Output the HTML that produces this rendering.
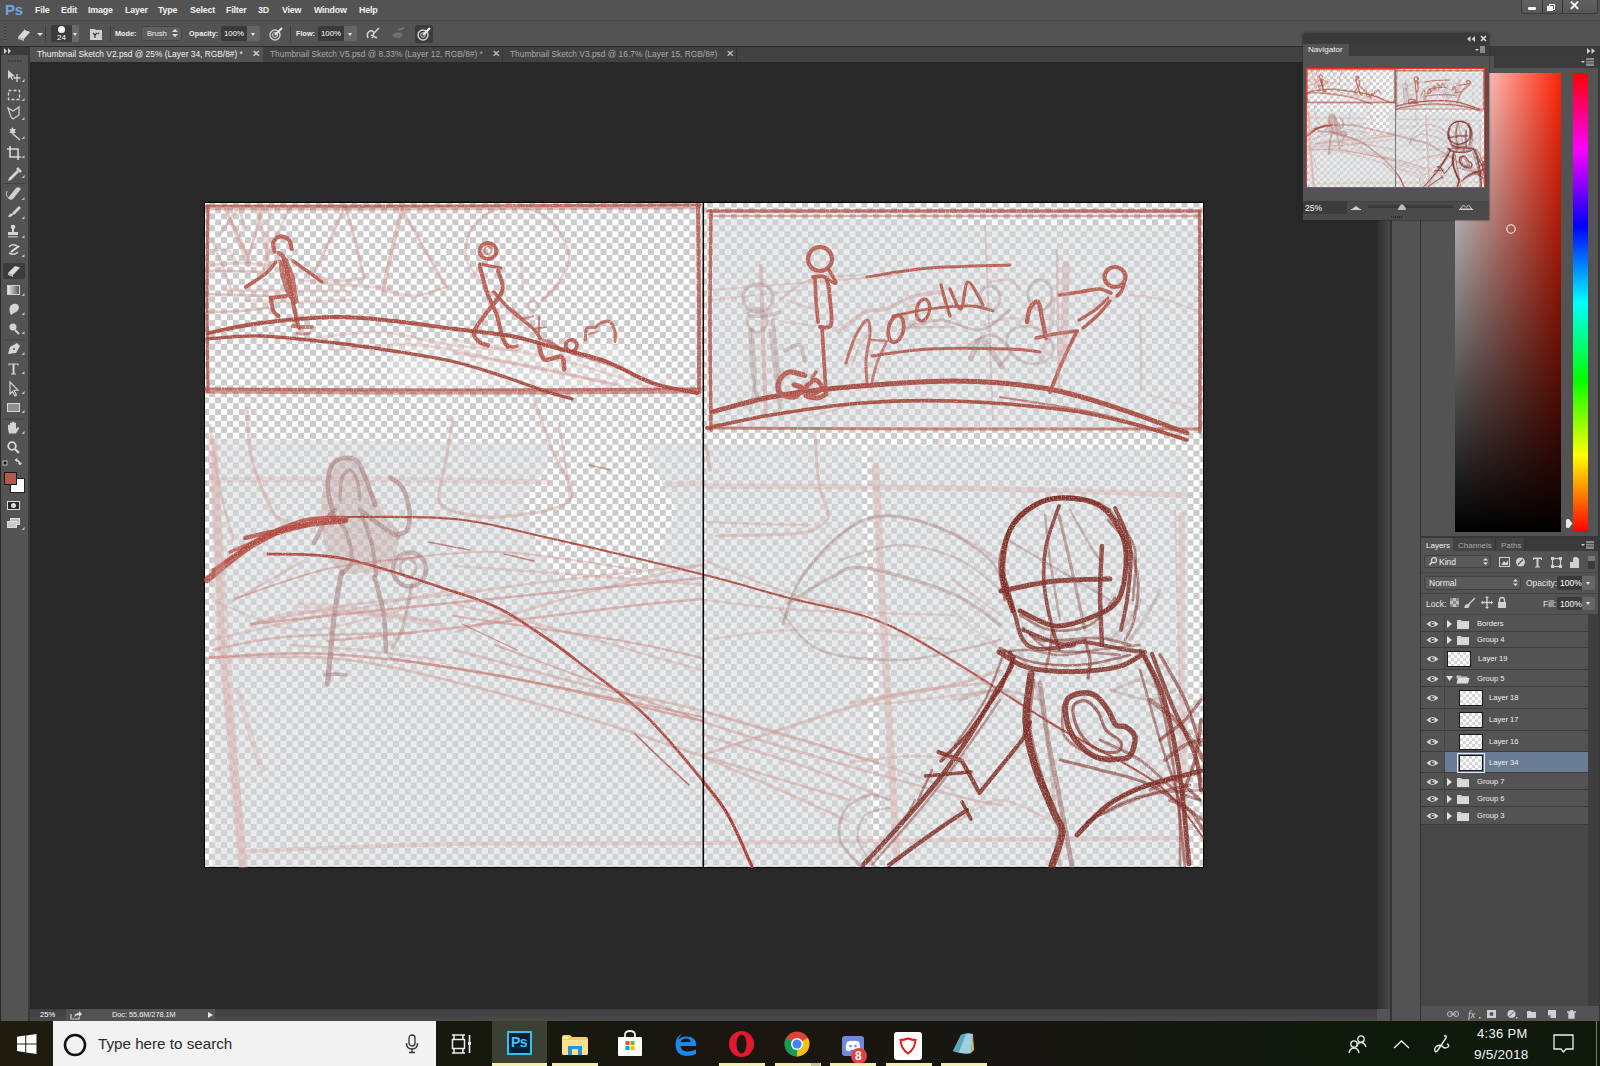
<!DOCTYPE html>
<html><head><meta charset="utf-8">
<style>
*{margin:0;padding:0;box-sizing:border-box}
html,body{width:1600px;height:1066px;overflow:hidden;background:#282828;font-family:"Liberation Sans",sans-serif;font-size:9px;color:#e6e6e6}
.a{position:absolute}
svg{position:absolute;overflow:visible}
#menubar{left:0;top:0;width:1600px;height:20px;background:#535353}
#menubar span{position:absolute;top:5px;font-size:8.9px;color:#f0f0f0;line-height:11px;font-weight:bold;letter-spacing:-0.2px}
#winbtn{left:1521px;top:0;width:77px;height:14px;background:linear-gradient(#606060,#575757);border:1px solid #3a3a3a;border-top:none;border-radius:0 0 3px 3px}
#optbar{left:0;top:20px;width:1600px;height:26px;background:#535353;border-top:1px solid #454545}
.txt{position:absolute;color:#e8e8e8;font-size:9px;line-height:10px;white-space:nowrap}
.inp{position:absolute;background:#3a3a3a;border-radius:2px}
.btn{position:absolute;background:#5e5e5e;border:1px solid #464646;border-radius:3px}
.vdiv{position:absolute;width:1px;background:#3e3e3e}
#tabbar{left:30px;top:47px;width:1348px;height:15px;background:#414141}
#toolbar{left:1px;top:47px;width:27px;height:974px;background:#535353}
#status{left:30px;top:1009px;width:1348px;height:12px;background:#464646}
#dockR{left:1377px;top:62px;width:13px;height:947px;background:linear-gradient(to right,#2e2e2e,#474747)}
#dock1{left:1392px;top:46px;width:28px;height:975px;background:#535353}
#dock{left:1421px;top:46px;width:179px;height:975px;background:#535353}
#taskbar{left:0;top:1021px;width:1600px;height:45px;background:linear-gradient(to right,#1f1c0f 0%,#161a0e 25%,#1a1610 50%,#171610 65%,#0e1a0c 85%,#0f190c 100%)}
</style></head><body>
<!-- menu bar -->
<div id="menubar" class="a">
 <span style="left:5px;top:1px;font-size:15px;line-height:17px;font-weight:bold;color:#6ea6dd">Ps</span>
 <span style="left:35px">File</span>
 <span style="left:61px">Edit</span>
 <span style="left:88px">Image</span>
 <span style="left:125px">Layer</span>
 <span style="left:158px">Type</span>
 <span style="left:190px">Select</span>
 <span style="left:226px">Filter</span>
 <span style="left:258px">3D</span>
 <span style="left:282px">View</span>
 <span style="left:314px">Window</span>
 <span style="left:359px">Help</span>
</div>
<div id="winbtn" class="a">
 <div class="a" style="left:20px;top:0;width:1px;height:13px;background:#333"></div>
 <div class="a" style="left:40px;top:0;width:1px;height:13px;background:#333"></div>
 <div class="a" style="left:6px;top:7px;width:8px;height:3px;background:#f4f4f4;border-radius:1px"></div>
 <div class="a" style="left:27px;top:4px;width:6px;height:6px;border:1.5px solid #f4f4f4"></div>
 <div class="a" style="left:25px;top:6px;width:6px;height:5px;background:#f4f4f4;border:1.5px solid #f4f4f4"></div>
 <span class="a" style="left:47px;top:-1px;font-size:13px;font-weight:bold;color:#f4f4f4;line-height:14px">&#x2715;</span>
</div>
<!-- options bar -->
<div id="optbar" class="a">
 <div class="a" style="left:4px;top:6px;width:2px;height:14px;background:repeating-linear-gradient(#3a3a3a 0 1px,#5a5a5a 1px 3px)"></div>
 <svg style="left:16px;top:5px" width="16" height="16" viewBox="0 0 16 16"><path d="M2 11 L9 3 L15 5 L8 13 Z" fill="#d8d8d8"/><path d="M2 11 L8 13 L8 15 L2 13 Z" fill="#bdbdbd"/><path d="M9 3 L15 5 L15 6 L9 4Z" fill="#222"/></svg>
 <div class="a" style="left:37px;top:12px;width:0;height:0;border-left:3px solid transparent;border-right:3px solid transparent;border-top:3px solid #e6e6e6"></div>
 <div class="vdiv" style="left:45px;top:5px;height:16px"></div>
 <div class="inp" style="left:51px;top:4px;width:22px;height:17px;background:#3b3b3b"></div>
 <div class="a" style="left:72px;top:4px;width:7px;height:17px;background:#6a6a6a;border-radius:0 2px 2px 0"></div>
 <div class="a" style="left:73px;top:12px;width:0;height:0;border-left:2.5px solid transparent;border-right:2.5px solid transparent;border-top:3px solid #e6e6e6"></div>
 <div class="a" style="left:58px;top:5px;width:7px;height:7px;border-radius:50%;background:#f4f4f4"></div>
 <span class="txt" style="left:57px;top:13px;font-size:8px;line-height:8px;color:#fff">24</span>
 <svg style="left:89px;top:6px" width="14" height="14" viewBox="0 0 14 14"><path d="M1 2 h5 l1 1 h6 v10 h-12z" fill="#cfcfcf"/><path d="M4 6 l2 2 l2 -2 M6 8 v3 M9 6 l1 1" stroke="#333" stroke-width="1.2" fill="none"/></svg>
 <div class="vdiv" style="left:110px;top:5px;height:16px"></div>
 <span class="txt" style="left:115px;top:8px;font-size:7.3px;font-weight:bold;color:#eee">Mode:</span>
 <div class="btn" style="left:141px;top:5px;width:41px;height:15px;background:#5d5d5d"></div>
 <span class="txt" style="left:147px;top:8px;font-size:7.6px;color:#eee">Brush</span>
 <svg style="left:172px;top:7px" width="6" height="10" viewBox="0 0 6 10"><path d="M0 4 L3 1 L6 4Z M0 6 L3 9 L6 6Z" fill="#e0e0e0"/></svg>
 <span class="txt" style="left:189px;top:8px;font-size:7.3px;font-weight:bold;color:#eee">Opacity:</span>
 <div class="inp" style="left:221px;top:5px;width:27px;height:15px;background:#3a3a3a"></div>
 <span class="txt" style="left:224px;top:8px;color:#fff;font-size:7.8px">100%</span>
 <div class="a" style="left:247px;top:5px;width:13px;height:15px;background:#666;border-radius:0 2px 2px 0"></div>
 <div class="a" style="left:251px;top:12px;width:0;height:0;border-left:2.5px solid transparent;border-right:2.5px solid transparent;border-top:3px solid #e6e6e6"></div>
 <svg style="left:268px;top:5px" width="16" height="16" viewBox="0 0 16 16"><circle cx="7" cy="9" r="5" fill="none" stroke="#cfcfcf" stroke-width="1.4"/><circle cx="7" cy="9" r="2.5" fill="none" stroke="#cfcfcf" stroke-width="1"/><path d="M7 9 L14 2" stroke="#e6e6e6" stroke-width="2"/></svg>
 <div class="vdiv" style="left:290px;top:5px;height:16px"></div>
 <span class="txt" style="left:296px;top:8px;font-size:7.3px;font-weight:bold;color:#eee">Flow:</span>
 <div class="inp" style="left:318px;top:5px;width:27px;height:15px;background:#3a3a3a"></div>
 <span class="txt" style="left:321px;top:8px;color:#fff;font-size:7.8px">100%</span>
 <div class="a" style="left:344px;top:5px;width:13px;height:15px;background:#666;border-radius:0 2px 2px 0"></div>
 <div class="a" style="left:348px;top:12px;width:0;height:0;border-left:2.5px solid transparent;border-right:2.5px solid transparent;border-top:3px solid #e6e6e6"></div>
 <svg style="left:365px;top:6px" width="16" height="14" viewBox="0 0 16 14"><path d="M3 11 Q1 6 5 4 Q8 3 9 6 L7 11 M9 6 L14 1 M6 8 L12 11" stroke="#d0d0d0" stroke-width="1.6" fill="none"/></svg>
 <svg style="left:390px;top:6px" width="16" height="14" viewBox="0 0 16 14"><path d="M2 8 Q6 4 12 6 Q14 8 10 11 Q5 12 2 8Z" fill="#6e6e6e"/><path d="M8 3 L14 1" stroke="#7a7a7a" stroke-width="1.5"/></svg>
 <div class="a" style="left:415px;top:4px;width:18px;height:18px;background:#3c3c3c;border-radius:2px"></div>
 <svg style="left:416px;top:5px" width="16" height="16" viewBox="0 0 16 16"><circle cx="7" cy="9" r="5" fill="none" stroke="#d6d6d6" stroke-width="1.4"/><circle cx="7" cy="9" r="2.3" fill="none" stroke="#d6d6d6" stroke-width="1"/><path d="M7 9 L14 2" stroke="#f0f0f0" stroke-width="2.2"/></svg>
</div>
<div id="tabbar" class="a">
 <div class="a" style="left:0;top:0;width:233px;height:15px;background:#535353"></div>
 <span class="txt" style="left:7px;top:2px;color:#f2f2f2;font-size:8.4px">Thumbnail Sketch V2.psd @ 25% (Layer 34, RGB/8#) *</span>
 <span class="txt" style="left:222px;top:2px;color:#e6e6e6;font-size:10px">&#x2715;</span>
 <span class="txt" style="left:240px;top:2px;color:#a8a8a8;font-size:8.4px">Thumbnail Sketch V5.psd @ 8.33% (Layer 12, RGB/8#) *</span>
 <span class="txt" style="left:462px;top:2px;color:#d0d0d0;font-size:10px">&#x2715;</span>
 <div class="vdiv" style="left:472px;top:0;height:15px;background:#353535"></div>
 <span class="txt" style="left:480px;top:2px;color:#a8a8a8;font-size:8.4px">Thumbnail Sketch V3.psd @ 16.7% (Layer 15, RGB/8#)</span>
 <span class="txt" style="left:696px;top:2px;color:#d0d0d0;font-size:10px">&#x2715;</span>
 <div class="vdiv" style="left:706px;top:0;height:15px;background:#353535"></div>
</div>
<!--CANVAS-->
<svg class="a" style="left:204px;top:202px" width="1000" height="666" viewBox="204 202 1000 666">
<defs>
<pattern id="chk" patternUnits="userSpaceOnUse" x="1.7" y="0" width="11.858" height="11.858"><rect width="11.858" height="11.858" fill="#fff"/><rect x="5.929" y="0" width="5.929" height="5.929" fill="#cbcbcb"/><rect x="0" y="5.929" width="5.929" height="5.929" fill="#cbcbcb"/></pattern>
<filter id="grain" filterUnits="userSpaceOnUse" x="204" y="202" width="1000" height="666">
<feTurbulence type="fractalNoise" baseFrequency="0.75" numOctaves="1" seed="7" result="n"/>
<feColorMatrix in="n" type="matrix" values="0 0 0 0 0  0 0 0 0 0  0 0 0 0 0  0 0 0 -2.0 2.05" result="a"/>
<feComposite in="SourceGraphic" in2="a" operator="in"/>
</filter>
</defs>
<rect x="204" y="202" width="1000" height="666" fill="#000"/>
<rect x="205" y="203" width="998" height="664" fill="url(#chk)"/>
<g id="sketch">
<g id="ov"><path fill="rgba(211,215,218,0.5)" d="M212 439L548 443L548 467L523 497L536 548L560 580L650 576L676 510L642 443L703 443L703 867L212 867Z"/>
<path fill="rgba(211,215,218,0.5)" d="M713 219L953 219L953 225L1197 225L1197 429L713 429Z"/>
<path fill="rgba(211,215,218,0.5)" d="M706 445L861 445L873 867L706 867Z"/>
<path fill="rgba(211,215,218,0.5)" d="M870.5 445L1188 450L1188 867L883 867Z"/>
<path fill="rgba(240,240,240,0.35)" d="M390 340L620 345L690 392L390 392Z"/></g>
<g id="ink" fill="none" stroke-linecap="round" stroke-linejoin="round" filter="url(#grain)">
<path d="M225.0 209.0C227.2 213.3 233.8 226.2 238.0 235.0C242.2 243.8 248.0 257.5 250.0 262.0" stroke="#cf9994" stroke-width="3.0" opacity="0.55"/>
<path d="M262.0 209.0C260.8 213.3 257.5 226.2 255.0 235.0C252.5 243.8 248.3 257.5 247.0 262.0" stroke="#cf9994" stroke-width="3.0" opacity="0.55"/>
<path d="M290.0 208.0C286.7 215.0 274.7 238.8 270.0 250.0C265.3 261.2 263.3 270.8 262.0 275.0" stroke="#cf9994" stroke-width="3.0" opacity="0.4"/>
<path d="M212.0 240.0C213.7 244.2 218.7 256.3 222.0 265.0C225.3 273.7 230.3 287.5 232.0 292.0" stroke="#cf9994" stroke-width="3.0" opacity="0.4"/>
<path d="M212.0 265.0C216.7 264.7 230.0 262.8 240.0 263.0C250.0 263.2 266.7 265.5 272.0 266.0" stroke="#cf9994" stroke-width="3.0" opacity="0.45"/>
<path d="M345.0 206.0C342.5 211.7 335.3 228.5 330.0 240.0C324.7 251.5 315.8 269.2 313.0 275.0" stroke="#cf9994" stroke-width="3.0" opacity="0.55"/>
<path d="M345.0 206.0C346.7 211.7 351.8 228.0 355.0 240.0C358.2 252.0 362.5 271.7 364.0 278.0" stroke="#cf9994" stroke-width="3.0" opacity="0.55"/>
<path d="M313.0 275.0C317.2 276.0 329.5 280.5 338.0 281.0C346.5 281.5 359.7 278.5 364.0 278.0" stroke="#cf9994" stroke-width="3.0" opacity="0.45"/>
<path d="M402.0 209.0C400.3 215.8 395.2 236.5 392.0 250.0C388.8 263.5 384.5 283.3 383.0 290.0" stroke="#cf9994" stroke-width="4.0" opacity="0.55"/>
<path d="M402.0 209.0C405.8 215.8 417.7 237.0 425.0 250.0C432.3 263.0 442.5 280.8 446.0 287.0" stroke="#cf9994" stroke-width="3.0" opacity="0.55"/>
<path d="M383.0 290.0C388.3 291.0 404.5 296.5 415.0 296.0C425.5 295.5 440.8 288.5 446.0 287.0" stroke="#cf9994" stroke-width="3.0" opacity="0.45"/>
<path d="M300.0 280.0C307.5 280.8 330.0 283.7 345.0 285.0C360.0 286.3 382.5 287.5 390.0 288.0" stroke="#cf9994" stroke-width="3.0" opacity="0.4"/>
<path d="M207.0 271.0C211.7 271.0 225.8 270.8 235.0 271.0C244.2 271.2 257.5 271.8 262.0 272.0" stroke="#cf9994" stroke-width="2.75" opacity="0.6"/>
<path d="M207.0 294.0C212.5 294.2 229.8 294.7 240.0 295.0C250.2 295.3 263.3 295.8 268.0 296.0" stroke="#cf9994" stroke-width="2.75" opacity="0.6"/>
<path d="M207.0 312.0C212.5 311.8 229.8 311.7 240.0 311.0C250.2 310.3 263.3 308.5 268.0 308.0" stroke="#cf9994" stroke-width="2.75" opacity="0.6"/>
<path d="M225.0 290.0C235.8 290.2 269.8 290.8 290.0 291.0C310.2 291.2 336.7 291.0 346.0 291.0" stroke="#cf9994" stroke-width="3.0" opacity="0.4"/>
<path d="M245.0 300.0C254.2 300.3 282.2 302.0 300.0 302.0C317.8 302.0 343.3 300.3 352.0 300.0" stroke="#cf9994" stroke-width="3.0" opacity="0.35"/>
<path d="M300.0 340.0C313.3 338.7 355.0 331.2 380.0 332.0C405.0 332.8 426.7 342.0 450.0 345.0C473.3 348.0 508.3 349.2 520.0 350.0" stroke="#cf9994" stroke-width="3.0" opacity="0.35"/>
<path d="M330.0 350.0C345.0 349.2 388.3 342.5 420.0 345.0C451.7 347.5 486.7 358.3 520.0 365.0C553.3 371.7 603.3 381.7 620.0 385.0" stroke="#cf9994" stroke-width="3.0" opacity="0.35"/>
<path d="M455.0 353.0C469.2 355.5 513.3 362.7 540.0 368.0C566.7 373.3 602.5 382.2 615.0 385.0" stroke="#cf9994" stroke-width="3.0" opacity="0.4"/>
<path d="M455.0 340.0C472.5 343.3 525.8 351.7 560.0 360.0C594.2 368.3 643.3 385.0 660.0 390.0" stroke="#cf9994" stroke-width="3.0" opacity="0.3"/>
<path d="M206.0 206.0C246.7 206.0 367.7 206.2 450.0 206.0C532.3 205.8 658.3 205.2 700.0 205.0" stroke="#b0554b" stroke-width="3.24" opacity="0.85"/>
<path d="M206.0 209.0C246.7 209.0 367.7 209.2 450.0 209.0C532.3 208.8 658.3 208.2 700.0 208.0" stroke="#b0554b" stroke-width="2.7" opacity="0.4"/>
<path d="M208.0 206.0C207.8 221.7 207.0 269.0 207.0 300.0C207.0 331.0 207.8 376.7 208.0 392.0" stroke="#b0554b" stroke-width="3.24" opacity="0.85"/>
<path d="M698.0 205.0C698.2 220.8 698.8 268.8 699.0 300.0C699.2 331.2 699.0 376.7 699.0 392.0" stroke="#b0554b" stroke-width="4.050000000000001" opacity="0.85"/>
<path d="M206.0 389.0C246.7 389.2 367.7 390.0 450.0 390.0C532.3 390.0 658.3 389.2 700.0 389.0" stroke="#b0554b" stroke-width="3.24" opacity="0.85"/>
<path d="M206.0 392.0C246.7 392.2 367.7 393.0 450.0 393.0C532.3 393.0 658.3 392.2 700.0 392.0" stroke="#b0554b" stroke-width="3.24" opacity="0.6"/>
<path d="M274.6 251.6C274.4 250.1 272.4 244.9 273.3 242.4C274.2 239.9 277.3 236.9 279.9 236.5C282.5 236.1 287.0 237.7 289.0 239.8C291.0 241.9 291.2 247.5 291.7 249.0" stroke="#b5564b" stroke-width="4.14" opacity="0.92"/>
<path d="M278.5 253.0C279.4 253.8 282.1 253.2 283.8 258.0C285.6 262.8 286.8 271.3 289.0 281.8C291.2 292.3 295.2 313.5 297.0 321.2C298.8 328.9 299.2 326.7 299.6 327.8" stroke="#b5564b" stroke-width="4.14" opacity="0.92"/>
<path d="M279 261L287 259L294 277L298 302L294 304L287 294L281 276Z" fill="#b5564b" opacity="0.8" stroke="#b5564b" stroke-width="1.5"/>
<path d="M286.0 296.0C284.7 296.2 280.5 296.7 278.0 297.0C275.5 297.3 272.2 297.8 271.0 298.0" stroke="#b5564b" stroke-width="4.14" opacity="0.92"/>
<path d="M245.7 287.0C249.0 284.8 260.4 278.0 265.4 273.9C270.4 269.8 274.1 264.1 275.9 262.1" stroke="#b5564b" stroke-width="3.6799999999999997" opacity="0.92"/>
<path d="M293.0 260.8C295.3 262.5 302.2 267.5 307.0 271.0C311.8 274.5 319.4 280.0 321.9 281.8" stroke="#b5564b" stroke-width="3.4499999999999997" opacity="0.92"/>
<path d="M270.7 297.6C271.1 299.8 272.0 307.6 273.3 310.7C274.6 313.8 277.6 315.1 278.5 316.0" stroke="#b5564b" stroke-width="4.14" opacity="0.92"/>
<path d="M293.0 326.0C294.5 326.2 298.8 326.8 302.0 327.0C305.2 327.2 310.3 327.0 312.0 327.0" stroke="#b5564b" stroke-width="3.9099999999999997" opacity="0.75"/>
<path d="M297.0 333.0C298.0 333.2 300.8 334.0 303.0 334.0C305.2 334.0 308.8 333.2 310.0 333.0" stroke="#b5564b" stroke-width="2.9899999999999998" opacity="0.6"/>
<path d="M221.0 233.0C223.8 229.2 234.2 210.7 238.0 210.0C241.8 209.3 243.0 225.8 244.0 229.0" stroke="#cf9994" stroke-width="3.25" opacity="0.45"/>
<path d="M230 219L248 265" stroke="#cf9994" stroke-width="3.75" opacity="0.4"/>
<path d="M258 210L270 268" stroke="#cf9994" stroke-width="3.75" opacity="0.4"/>
<path d="M270 210L266 258" stroke="#cf9994" stroke-width="3.0" opacity="0.35"/>
<path d="M214.0 250.0C216.3 250.0 224.3 248.0 228.0 250.0C231.7 252.0 234.7 260.0 236.0 262.0" stroke="#cf9994" stroke-width="3.0" opacity="0.4"/>
<ellipse cx="488" cy="251" rx="8.5" ry="8" stroke="#b5564b" stroke-width="3.9099999999999997" opacity="0.92"/>
<ellipse cx="488" cy="250" rx="3.5" ry="4" stroke="#b5564b" stroke-width="2.3" opacity="0.6"/>
<path d="M479.7 263.8C481.4 264.2 486.5 265.3 490.0 266.0C493.5 266.7 499.0 267.7 500.8 268.0" stroke="#b5564b" stroke-width="3.2199999999999998" opacity="0.92"/>
<path d="M479.7 265.2C480.9 269.7 484.0 283.8 486.8 292.0C489.6 300.2 494.0 307.0 496.6 314.5C499.2 322.0 500.4 331.6 502.3 337.0C504.2 342.4 507.0 345.2 507.9 346.9" stroke="#b5564b" stroke-width="4.14" opacity="0.92"/>
<path d="M498.0 270.8C498.7 274.1 504.4 283.3 502.3 290.6C500.2 297.9 490.1 307.7 485.4 314.5C480.7 321.3 475.3 326.9 474.1 331.4C472.9 335.9 476.0 338.9 478.3 341.3C480.6 343.7 486.6 344.8 488.2 345.5" stroke="#b5564b" stroke-width="4.14" opacity="0.92"/>
<path d="M505.0 344.0C506.2 344.5 510.0 346.7 512.0 347.0C514.0 347.3 516.2 346.2 517.0 346.0" stroke="#b5564b" stroke-width="3.4499999999999997" opacity="0.92"/>
<path d="M493.8 292.0C495.9 294.3 502.3 301.8 506.5 306.0C510.7 310.2 514.8 313.5 519.2 317.3C523.7 321.1 529.7 325.1 533.2 328.6C536.7 332.1 539.1 336.9 540.3 338.5" stroke="#b5564b" stroke-width="3.4499999999999997" opacity="0.92"/>
<path d="M513.0 309.0C514.7 310.5 519.7 316.8 523.0 318.0C526.3 319.2 531.3 316.3 533.0 316.0" stroke="#b5564b" stroke-width="2.3" opacity="0.6"/>
<path d="M539 317L539 336" stroke="#b5564b" stroke-width="2.07" opacity="0.7"/>
<path d="M533 329L546 327" stroke="#b5564b" stroke-width="2.07" opacity="0.7"/>
<ellipse cx="533.2" cy="306" rx="5" ry="5" stroke="#cf9994" stroke-width="2.5" opacity="0.5"/>
<path d="M542.0 300.0C543.7 298.7 549.2 294.8 552.0 292.0C554.8 289.2 557.8 284.5 559.0 283.0" stroke="#cf9994" stroke-width="2.5" opacity="0.45"/>
<path d="M478.0 277.0C476.0 273.8 467.3 265.5 466.0 258.0C464.7 250.5 466.0 239.7 470.0 232.0C474.0 224.3 482.2 216.2 490.0 212.0C497.8 207.8 507.0 205.7 517.0 207.0C527.0 208.3 541.3 212.0 550.0 220.0C558.7 228.0 567.3 245.0 569.0 255.0C570.7 265.0 564.5 272.5 560.0 280.0C555.5 287.5 545.0 296.7 542.0 300.0" stroke="#cf9994" stroke-width="2.75" opacity="0.45"/>
<path d="M521 260L523 290" stroke="#cf9994" stroke-width="2.75" opacity="0.4"/>
<ellipse cx="571.3" cy="345.5" rx="5.6" ry="5.6" stroke="#b5564b" stroke-width="3.9099999999999997" opacity="0.92"/>
<path d="M538.9 345.5C539.8 347.9 540.8 357.7 544.5 359.6C548.2 361.5 558.1 355.2 561.4 356.8C564.7 358.4 563.7 367.3 564.2 369.4" stroke="#b5564b" stroke-width="4.6" opacity="0.92"/>
<path d="M543.0 340.0C544.5 340.5 549.0 341.3 552.0 343.0C555.0 344.7 559.5 348.8 561.0 350.0" stroke="#b5564b" stroke-width="3.4499999999999997" opacity="0.7"/>
<path d="M585.4 339.9C585.6 338.0 585.2 330.7 586.8 328.6C588.4 326.5 592.9 328.1 595.2 327.2C597.5 326.3 598.4 323.9 600.8 323.0C603.1 322.1 606.9 320.1 609.3 321.5C611.6 322.9 614.0 328.1 614.9 331.4C615.8 334.7 614.9 339.6 614.9 341.3" stroke="#b5564b" stroke-width="3.2199999999999998" opacity="0.8"/>
<path d="M589 334L597 332" stroke="#b5564b" stroke-width="2.3" opacity="0.6"/>
<path d="M208.0 333.0C216.8 331.3 239.7 325.7 261.0 323.0C282.3 320.3 314.0 317.3 336.0 317.0C358.0 316.7 373.2 319.0 393.0 321.0C412.8 323.0 435.3 326.5 455.0 329.0C474.7 331.5 495.3 333.2 511.0 336.0C526.7 338.8 533.3 341.8 549.0 346.0C564.7 350.2 587.8 354.8 605.0 361.0C622.2 367.2 636.7 377.7 652.0 383.0C667.3 388.3 689.5 391.3 697.0 393.0" stroke="#a5443a" stroke-width="3.9600000000000004" opacity="0.92"/>
<path d="M207.0 339.0C216.0 338.5 239.5 335.3 261.0 336.0C282.5 336.7 314.0 340.5 336.0 343.0C358.0 345.5 373.2 347.8 393.0 351.0C412.8 354.2 436.8 357.8 455.0 362.0C473.2 366.2 486.5 371.0 502.0 376.0C517.5 381.0 536.3 388.2 548.0 392.0C559.7 395.8 568.0 397.8 572.0 399.0" stroke="#a5443a" stroke-width="3.3000000000000003" opacity="0.92"/>
<path d="M560.0 350.0C568.3 352.5 593.3 359.2 610.0 365.0C626.7 370.8 651.7 381.7 660.0 385.0" stroke="#a8463c" stroke-width="2.2" opacity="0.6"/>
<path d="M247.0 409.0C247.8 417.5 247.7 442.8 252.0 460.0C256.3 477.2 267.2 501.8 273.0 512.0C278.8 522.2 284.7 519.5 287.0 521.0" stroke="#cf9994" stroke-width="3.5" opacity="0.45"/>
<path d="M210.0 425.0C211.5 434.8 215.2 464.8 219.0 484.0C222.8 503.2 230.7 530.7 233.0 540.0" stroke="#cf9994" stroke-width="2.75" opacity="0.4"/>
<path d="M214.0 455.0C214.8 472.5 217.8 529.2 219.0 560.0C220.2 590.8 218.8 609.7 221.0 640.0C223.2 670.3 228.3 704.7 232.0 742.0C235.7 779.3 241.2 843.7 243.0 864.0" stroke="#d9aaa6" stroke-width="7.700000000000001" opacity="0.35"/>
<path d="M238.0 690.0C240.8 700.0 251.0 736.7 255.0 750.0C259.0 763.3 260.8 766.7 262.0 770.0" stroke="#d9aaa6" stroke-width="5.5" opacity="0.3"/>
<path d="M453.0 418.0C451.8 425.0 448.3 446.3 446.0 460.0C443.7 473.7 437.5 491.3 439.0 500.0C440.5 508.7 452.3 510.0 455.0 512.0" stroke="#cf9994" stroke-width="3.25" opacity="0.45"/>
<path d="M534.0 399.0C537.0 407.5 546.0 433.2 552.0 450.0C558.0 466.8 578.7 488.8 570.0 500.0C561.3 511.2 519.2 515.0 500.0 517.0C480.8 519.0 462.5 512.8 455.0 512.0" stroke="#cf9994" stroke-width="3.25" opacity="0.45"/>
<path d="M559.0 424.0C560.0 430.0 563.2 447.3 565.0 460.0C566.8 472.7 569.2 493.3 570.0 500.0" stroke="#cf9994" stroke-width="2.5" opacity="0.4"/>
<path d="M212.0 480.0C235.0 479.8 294.0 478.7 350.0 479.0C406.0 479.3 515.0 481.5 548.0 482.0" stroke="#d9aaa6" stroke-width="5.5" opacity="0.3"/>
<path d="M665 485L703 483" stroke="#d9aaa6" stroke-width="5.5" opacity="0.3"/>
<path d="M233.0 601.0C239.2 597.5 258.3 586.7 270.0 580.0C281.7 573.3 297.5 564.2 303.0 561.0" stroke="#cf9994" stroke-width="2.5" opacity="0.45"/>
<path d="M252.0 624.0C268.3 620.8 316.2 610.0 350.0 605.0C383.8 600.0 420.0 598.2 455.0 594.0C490.0 589.8 519.2 584.8 560.0 580.0C600.8 575.2 676.7 567.5 700.0 565.0" stroke="#cf9994" stroke-width="2.75" opacity="0.4"/>
<path d="M210.0 657.0C231.7 657.3 299.2 654.8 340.0 659.0C380.8 663.2 411.7 671.5 455.0 682.0C498.3 692.5 558.7 709.7 600.0 722.0C641.3 734.3 661.3 743.0 703.0 756.0C744.7 769.0 825.5 792.7 850.0 800.0" stroke="#cf9994" stroke-width="2.75" opacity="0.5"/>
<path d="M455.0 650.0C477.5 656.0 548.7 675.8 590.0 686.0C631.3 696.2 655.0 698.2 703.0 711.0C751.0 723.8 848.8 754.3 878.0 763.0" stroke="#cf9994" stroke-width="2.75" opacity="0.5"/>
<path d="M455.0 632.0C472.5 626.7 530.0 608.7 560.0 600.0C590.0 591.3 611.2 585.8 635.0 580.0C658.8 574.2 691.7 567.5 703.0 565.0" stroke="#cf9994" stroke-width="2.75" opacity="0.4"/>
<path d="M455.0 566.0C475.8 567.5 538.3 571.8 580.0 575.0C621.7 578.2 684.2 583.3 705.0 585.0" stroke="#cf9994" stroke-width="2.75" opacity="0.35"/>
<path d="M455.0 604.0C472.5 608.3 519.2 619.0 560.0 630.0C600.8 641.0 676.7 663.3 700.0 670.0" stroke="#cf9994" stroke-width="2.5" opacity="0.35"/>
<path d="M248.0 851.0C282.5 849.8 379.2 845.3 455.0 844.0C530.8 842.7 620.0 843.7 703.0 843.0C786.0 842.3 872.7 840.8 953.0 840.0C1033.3 839.2 1146.3 838.3 1185.0 838.0" stroke="#d9aaa6" stroke-width="3.8500000000000005" opacity="0.4"/>
<path d="M212.0 600.0C226.7 605.0 268.7 628.3 300.0 630.0C331.3 631.7 383.3 613.3 400.0 610.0" stroke="#cf9994" stroke-width="2.5" opacity="0.3"/>
<path d="M390.0 560.0C408.3 558.7 458.3 550.3 500.0 552.0C541.7 553.7 616.7 567.0 640.0 570.0" stroke="#cf9994" stroke-width="2.0" opacity="0.5"/>
<path d="M212.0 640.0C226.7 636.7 259.5 628.3 300.0 620.0C340.5 611.7 429.2 595.0 455.0 590.0" stroke="#cf9994" stroke-width="2.5" opacity="0.35"/>
<path d="M327 475Q330 458 345 457Q362 460 372 490Q380 510 398 530Q400 560 385 572L345 574Q322 560 323 530Q318 500 327 475Z" fill="#c49a98" opacity="0.35"/>
<path d="M335.0 520.0C333.8 515.0 328.5 499.2 328.0 490.0C327.5 480.8 329.2 470.3 332.0 465.0C334.8 459.7 340.7 458.5 345.0 458.0C349.3 457.5 354.2 457.5 358.0 462.0C361.8 466.5 365.2 477.8 368.0 485.0C370.8 492.2 373.8 501.7 375.0 505.0" stroke="#a07674" stroke-width="4.6" opacity="0.55"/>
<path d="M340.0 500.0C340.3 496.3 340.3 483.0 342.0 478.0C343.7 473.0 347.5 469.7 350.0 470.0C352.5 470.3 355.3 475.0 357.0 480.0C358.7 485.0 359.5 496.7 360.0 500.0" stroke="#a07674" stroke-width="3.4499999999999997" opacity="0.45"/>
<path d="M314.0 543.0C316.0 539.2 322.5 525.5 326.0 520.0C329.5 514.5 333.5 511.7 335.0 510.0" stroke="#a07674" stroke-width="4.6" opacity="0.5"/>
<path d="M360.0 510.0C363.3 512.5 373.7 520.5 380.0 525.0C386.3 529.5 395.0 535.0 398.0 537.0" stroke="#a07674" stroke-width="4.6" opacity="0.5"/>
<path d="M330.0 515.0C332.5 517.5 341.3 522.5 345.0 530.0C348.7 537.5 352.5 552.7 352.0 560.0C351.5 567.3 343.7 571.7 342.0 574.0" stroke="#a07674" stroke-width="4.0249999999999995" opacity="0.45"/>
<path d="M362.0 515.0C363.7 520.0 369.7 535.0 372.0 545.0C374.3 555.0 375.3 570.0 376.0 575.0" stroke="#a07674" stroke-width="4.0249999999999995" opacity="0.5"/>
<path d="M341.6 572.0C340.4 579.0 336.9 595.3 334.5 614.0C332.1 632.7 328.7 672.3 327.5 684.0" stroke="#a07674" stroke-width="5.175" opacity="0.55"/>
<path d="M374.4 576.6C375.9 582.8 381.8 601.5 383.7 614.0C385.6 626.5 385.6 645.2 386.0 651.5" stroke="#a07674" stroke-width="4.6" opacity="0.55"/>
<path d="M325.0 675.0C326.7 674.8 331.5 674.0 335.0 674.0C338.5 674.0 344.2 674.8 346.0 675.0" stroke="#a07674" stroke-width="3.4499999999999997" opacity="0.5"/>
<path d="M390.8 478.0C392.8 479.6 399.4 482.0 402.5 487.5C405.6 493.0 408.8 504.0 409.5 511.0C410.2 518.0 408.9 525.8 407.0 529.7C405.1 533.6 399.3 533.6 397.8 534.4" stroke="#a07674" stroke-width="4.6" opacity="0.55"/>
<ellipse cx="409.5" cy="569.5" rx="16.5" ry="17" stroke="#a07674" stroke-width="4.6" opacity="0.5"/>
<ellipse cx="408" cy="568" rx="8" ry="9" stroke="#a07674" stroke-width="2.875" opacity="0.4"/>
<path d="M412.0 585.0C410.3 592.5 405.3 619.5 402.0 630.0C398.7 640.5 393.7 645.0 392.0 648.0" stroke="#a07674" stroke-width="3.4499999999999997" opacity="0.4"/>
<path d="M300.0 605.0C310.0 605.8 336.7 606.7 360.0 610.0C383.3 613.3 426.7 622.5 440.0 625.0" stroke="#d9aaa6" stroke-width="6.6000000000000005" opacity="0.3"/>
<path d="M290.0 645.0C301.7 645.8 335.0 647.5 360.0 650.0C385.0 652.5 426.7 658.3 440.0 660.0" stroke="#cf9994" stroke-width="2.5" opacity="0.4"/>
<path d="M207.0 580.0C214.5 574.2 236.0 554.7 252.0 545.0C268.0 535.3 287.5 526.3 303.0 522.0C318.5 517.7 338.0 519.5 345.0 519.0" stroke="#b44a3f" stroke-width="6.6000000000000005" opacity="0.85"/>
<path d="M213.0 570.0C220.8 565.0 243.8 547.5 260.0 540.0C276.2 532.5 301.7 527.5 310.0 525.0" stroke="#b44a3f" stroke-width="3.3000000000000003" opacity="0.8"/>
<path d="M245.0 538.0C254.2 536.0 283.2 528.8 300.0 526.0C316.8 523.2 338.3 521.8 346.0 521.0" stroke="#b44a3f" stroke-width="4.4" opacity="0.85"/>
<path d="M230.0 552.0C236.7 549.2 257.8 539.5 270.0 535.0C282.2 530.5 297.5 526.7 303.0 525.0" stroke="#b44a3f" stroke-width="3.3000000000000003" opacity="0.75"/>
<path d="M346.0 517.0C364.2 517.3 421.2 515.5 455.0 519.0C488.8 522.5 507.3 528.7 549.0 538.0C590.7 547.3 665.0 565.0 705.0 575.0C745.0 585.0 760.5 590.5 789.0 598.0C817.5 605.5 848.7 609.5 876.0 620.0C903.3 630.5 923.3 643.5 953.0 661.0C982.7 678.5 1020.2 704.7 1054.0 725.0C1087.8 745.3 1131.2 764.3 1156.0 783.0C1180.8 801.7 1195.2 828.0 1203.0 837.0" stroke="#aa3f35" stroke-width="2.07" opacity="0.9"/>
<path d="M268.0 554.0C281.0 554.8 314.8 552.7 346.0 559.0C377.2 565.3 429.0 583.5 455.0 592.0C481.0 600.5 486.3 602.0 502.0 610.0C517.7 618.0 535.8 631.0 549.0 640.0C562.2 649.0 564.8 651.3 581.0 664.0C597.2 676.7 625.7 696.5 646.0 716.0C666.3 735.5 689.3 764.5 703.0 781.0C716.7 797.5 719.8 800.8 728.0 815.0C736.2 829.2 748.0 857.5 752.0 866.0" stroke="#aa3f35" stroke-width="2.76" opacity="0.9"/>
<path d="M635.0 734.0C639.5 738.3 653.0 751.5 662.0 760.0C671.0 768.5 684.5 780.8 689.0 785.0" stroke="#aa3f35" stroke-width="1.6099999999999999" opacity="0.7"/>
<path d="M589 465L610 470" stroke="#aa3f35" stroke-width="1.38" opacity="0.5"/>
<path d="M708.0 211.0C748.3 211.0 868.0 211.0 950.0 211.0C1032.0 211.0 1158.3 211.0 1200.0 211.0" stroke="#b0554b" stroke-width="3.5100000000000002" opacity="0.85"/>
<path d="M712.0 216.0C751.7 216.0 868.7 216.0 950.0 216.0C1031.3 216.0 1158.3 216.0 1200.0 216.0" stroke="#b0554b" stroke-width="2.7" opacity="0.5"/>
<path d="M711.0 211.0C710.8 229.2 710.0 283.5 710.0 320.0C710.0 356.5 710.8 411.7 711.0 430.0" stroke="#b0554b" stroke-width="3.5100000000000002" opacity="0.85"/>
<path d="M1199.5 211.0C1199.6 229.2 1199.9 283.2 1200.0 320.0C1200.1 356.8 1200.0 413.3 1200.0 432.0" stroke="#b0554b" stroke-width="3.5100000000000002" opacity="0.85"/>
<path d="M707.0 428.0C747.5 428.2 867.8 428.8 950.0 429.0C1032.2 429.2 1158.3 429.0 1200.0 429.0" stroke="#b0554b" stroke-width="2.9700000000000006" opacity="0.7"/>
<path d="M761.0 266.0C761.3 278.3 762.2 314.8 763.0 340.0C763.8 365.2 765.5 404.2 766.0 417.0" stroke="#cf9994" stroke-width="4.0" opacity="0.5"/>
<ellipse cx="758" cy="298" rx="15" ry="14" stroke="#a07674" stroke-width="3.4499999999999997" opacity="0.35"/>
<ellipse cx="757" cy="320" rx="10" ry="12" stroke="#a07674" stroke-width="2.875" opacity="0.3"/>
<path d="M750.0 330.0C750.3 336.7 750.7 358.3 752.0 370.0C753.3 381.7 757.0 395.0 758.0 400.0" stroke="#a07674" stroke-width="3.4499999999999997" opacity="0.3"/>
<path d="M770.0 330.0C770.8 336.7 773.3 356.7 775.0 370.0C776.7 383.3 779.2 403.3 780.0 410.0" stroke="#a07674" stroke-width="3.4499999999999997" opacity="0.3"/>
<path d="M780.0 300.0C785.0 296.7 796.7 284.2 810.0 280.0C823.3 275.8 851.7 275.8 860.0 275.0" stroke="#cf9994" stroke-width="2.25" opacity="0.4"/>
<path d="M713 290L900 275" stroke="#cf9994" stroke-width="1.875" opacity="0.35"/>
<path d="M713 300L800 290" stroke="#cf9994" stroke-width="1.875" opacity="0.3"/>
<path d="M985.0 225.0C985.7 240.8 987.7 287.5 989.0 320.0C990.3 352.5 992.3 403.3 993.0 420.0" stroke="#cf9994" stroke-width="1.875" opacity="0.4"/>
<path d="M1140.0 315.0C1140.2 320.8 1140.8 337.5 1141.0 350.0C1141.2 362.5 1141.0 383.3 1141.0 390.0" stroke="#cf9994" stroke-width="2.5" opacity="0.35"/>
<path d="M1130.0 295.0C1135.8 295.8 1153.3 297.2 1165.0 300.0C1176.7 302.8 1194.2 310.0 1200.0 312.0" stroke="#cf9994" stroke-width="1.875" opacity="0.3"/>
<path d="M800 420L850 405" stroke="#cf9994" stroke-width="1.5" opacity="0.35"/>
<path d="M1150 395L1198 410" stroke="#cf9994" stroke-width="1.5" opacity="0.35"/>
<path d="M712.0 412.0C721.8 409.5 750.0 401.0 771.0 397.0C792.0 393.0 807.7 390.7 838.0 388.0C868.3 385.3 918.8 381.0 953.0 381.0C987.2 381.0 1016.7 383.8 1043.0 388.0C1069.3 392.2 1087.0 398.5 1111.0 406.0C1135.0 413.5 1174.3 428.5 1187.0 433.0" stroke="#a5443a" stroke-width="4.840000000000001" opacity="0.92"/>
<path d="M707.0 428.0C717.7 425.8 745.3 419.2 771.0 415.0C796.7 410.8 830.7 405.3 861.0 403.0C891.3 400.7 918.8 399.8 953.0 401.0C987.2 402.2 1036.0 406.2 1066.0 410.0C1096.0 413.8 1112.8 419.0 1133.0 424.0C1153.2 429.0 1178.0 437.3 1187.0 440.0" stroke="#a5443a" stroke-width="3.74" opacity="0.92"/>
<path d="M1000.0 397.0C1016.7 399.8 1070.0 407.3 1100.0 414.0C1130.0 420.7 1166.7 433.2 1180.0 437.0" stroke="#a8463c" stroke-width="2.2" opacity="0.6"/>
<ellipse cx="820" cy="259" rx="12" ry="12" stroke="#b5564b" stroke-width="4.14" opacity="0.92"/>
<path d="M829.0 270.0C830.2 272.2 836.3 281.5 836.0 283.0C835.7 284.5 828.5 279.7 827.0 279.0" stroke="#b5564b" stroke-width="3.4499999999999997" opacity="0.92"/>
<path d="M815.0 278.0C815.2 281.7 815.5 292.7 816.0 300.0C816.5 307.3 817.7 318.3 818.0 322.0" stroke="#b5564b" stroke-width="3.6799999999999997" opacity="0.92"/>
<path d="M813.0 277.0C815.2 277.2 823.2 274.2 826.0 278.0C828.8 281.8 829.2 292.2 830.0 300.0C830.8 307.8 832.7 320.5 831.0 325.0C829.3 329.5 821.8 326.7 820.0 327.0" stroke="#b5564b" stroke-width="3.9099999999999997" opacity="0.92"/>
<path d="M822.0 327.0C822.3 332.5 823.3 348.8 824.0 360.0C824.7 371.2 825.7 388.3 826.0 394.0" stroke="#b5564b" stroke-width="3.6799999999999997" opacity="0.92"/>
<path d="M804.9 375.5C802.2 374.9 793.1 371.1 788.8 372.0C784.5 372.9 780.5 377.5 779.0 381.0C777.5 384.5 777.5 390.3 780.0 393.0C782.5 395.7 790.7 397.8 794.2 397.0C797.8 396.2 801.3 390.0 801.3 388.0C801.3 386.0 795.4 385.5 794.2 385.0" stroke="#b5564b" stroke-width="5.289999999999999" opacity="0.92"/>
<path d="M801.0 392.0C802.2 390.8 805.5 387.0 808.0 385.0C810.5 383.0 813.7 379.5 816.0 380.0C818.3 380.5 822.2 385.8 822.0 388.0C821.8 390.2 817.7 391.7 815.0 393.0C812.3 394.3 805.5 395.2 806.0 396.0C806.5 396.8 814.7 398.3 818.0 398.0C821.3 397.7 824.7 394.7 826.0 394.0" stroke="#b5564b" stroke-width="4.83" opacity="0.92"/>
<path d="M812 378L816 372" stroke="#b5564b" stroke-width="3.4499999999999997" opacity="0.8"/>
<path d="M785.0 350.6C787.4 349.7 796.2 343.4 799.5 345.2C802.8 347.0 804.0 358.6 804.9 361.3" stroke="#a07674" stroke-width="4.0249999999999995" opacity="0.35"/>
<path d="M772.8 320.0C773.5 326.7 775.5 346.6 777.0 360.0C778.5 373.4 780.9 393.8 781.7 400.5" stroke="#a07674" stroke-width="3.6799999999999997" opacity="0.35"/>
<path d="M750.0 316.0C752.5 316.0 760.0 316.7 765.0 316.0C770.0 315.3 777.5 312.7 780.0 312.0" stroke="#a07674" stroke-width="3.4499999999999997" opacity="0.3"/>
<path d="M752.0 330.0C752.5 338.3 755.3 366.7 755.0 380.0C754.7 393.3 750.8 405.0 750.0 410.0" stroke="#a07674" stroke-width="3.4499999999999997" opacity="0.3"/>
<path d="M787.0 300.6C789.2 301.3 795.2 303.5 800.0 305.0C804.8 306.5 813.0 308.8 815.6 309.6" stroke="#cf9994" stroke-width="2.5" opacity="0.35"/>
<path d="M785.0 322.0C787.5 322.3 795.0 323.3 800.0 324.0C805.0 324.7 812.5 325.7 815.0 326.0" stroke="#cf9994" stroke-width="2.5" opacity="0.3"/>
<path d="M846.0 363.0C847.5 358.7 851.5 344.2 855.0 337.0C858.5 329.8 864.5 320.5 867.0 320.0C869.5 319.5 870.2 327.3 870.0 334.0C869.8 340.7 866.5 352.0 866.0 360.0C865.5 368.0 866.8 378.3 867.0 382.0" stroke="#b5564b" stroke-width="2.9899999999999998" opacity="0.8"/>
<path d="M872 340L888 341" stroke="#b5564b" stroke-width="2.3" opacity="0.7"/>
<path d="M886.0 343.0C884.5 346.3 879.3 356.5 877.0 363.0C874.7 369.5 872.8 378.8 872.0 382.0" stroke="#b5564b" stroke-width="2.76" opacity="0.7"/>
<path d="M838.0 332.0C842.5 328.7 857.0 315.8 865.0 312.0C873.0 308.2 877.8 311.7 886.0 309.0C894.2 306.3 904.5 298.8 914.0 296.0C923.5 293.2 938.2 292.7 943.0 292.0" stroke="#cf9994" stroke-width="3.75" opacity="0.45"/>
<path d="M852.0 365.0C853.3 361.7 857.3 350.0 860.0 345.0C862.7 340.0 866.7 336.7 868.0 335.0" stroke="#cf9994" stroke-width="2.5" opacity="0.4"/>
<ellipse cx="896" cy="329" rx="7.5" ry="13.5" stroke="#b5564b" stroke-width="3.6799999999999997" opacity="0.92" transform="rotate(12 896 329)"/>
<ellipse cx="923" cy="310" rx="6.5" ry="11" stroke="#b5564b" stroke-width="3.2199999999999998" opacity="0.92" transform="rotate(12 923 310)"/>
<ellipse cx="912" cy="315" rx="6" ry="10" stroke="#cf9994" stroke-width="3.125" opacity="0.4" transform="rotate(12 912 315)"/>
<path d="M941.0 285.0C941.7 287.5 943.5 294.8 945.0 300.0C946.5 305.2 949.2 313.3 950.0 316.0" stroke="#b5564b" stroke-width="3.2199999999999998" opacity="0.92"/>
<path d="M950.0 289.0C951.8 292.3 958.0 310.2 961.0 309.0C964.0 307.8 964.3 282.7 968.0 282.0C971.7 281.3 980.5 301.2 983.0 305.0" stroke="#b5564b" stroke-width="3.2199999999999998" opacity="0.92"/>
<path d="M893.0 316.0C899.0 314.8 916.0 310.7 929.0 309.0C942.0 307.3 960.3 305.7 971.0 306.0C981.7 306.3 989.3 310.2 993.0 311.0" stroke="#b5564b" stroke-width="2.76" opacity="0.92"/>
<path d="M909.0 328.0C912.5 327.8 922.7 327.2 930.0 327.0C937.3 326.8 949.2 327.0 953.0 327.0" stroke="#cf9994" stroke-width="2.5" opacity="0.45"/>
<path d="M971.0 358.0C972.8 355.0 976.8 338.5 982.0 340.0C987.2 341.5 998.7 362.5 1002.0 367.0" stroke="#a07674" stroke-width="5.75" opacity="0.35"/>
<path d="M990.0 282.0C993.3 281.7 1005.0 278.7 1010.0 280.0C1015.0 281.3 1018.3 288.3 1020.0 290.0" stroke="#cf9994" stroke-width="2.75" opacity="0.35"/>
<path d="M985.0 325.0C989.2 323.8 1002.5 318.5 1010.0 318.0C1017.5 317.5 1026.7 321.3 1030.0 322.0" stroke="#cf9994" stroke-width="2.75" opacity="0.3"/>
<path d="M867.0 277.0C877.3 275.5 905.2 270.0 929.0 268.0C952.8 266.0 996.5 265.5 1010.0 265.0" stroke="#b5564b" stroke-width="2.9899999999999998" opacity="0.92"/>
<path d="M872.0 356.0C881.5 354.8 906.0 350.2 929.0 349.0C952.0 347.8 991.5 348.5 1010.0 349.0C1028.5 349.5 1035.0 351.5 1040.0 352.0" stroke="#b5564b" stroke-width="2.9899999999999998" opacity="0.92"/>
<path d="M900.0 330.0C906.7 328.3 926.7 320.0 940.0 320.0C953.3 320.0 968.3 331.7 980.0 330.0C991.7 328.3 1005.0 313.3 1010.0 310.0" stroke="#a07674" stroke-width="2.875" opacity="0.35"/>
<ellipse cx="990" cy="298" rx="10" ry="12" stroke="#a07674" stroke-width="2.875" opacity="0.3"/>
<ellipse cx="1040" cy="295" rx="12" ry="15" stroke="#a07674" stroke-width="2.875" opacity="0.35"/>
<ellipse cx="1030" cy="345" rx="24" ry="18" stroke="#a07674" stroke-width="2.875" opacity="0.3" transform="rotate(20 1030 345)"/>
<path d="M960.0 350.0C965.0 347.5 981.7 335.0 990.0 335.0C998.3 335.0 1008.3 345.0 1010.0 350.0C1011.7 355.0 1001.7 362.5 1000.0 365.0" stroke="#a07674" stroke-width="2.875" opacity="0.3"/>
<ellipse cx="1115" cy="277" rx="10.5" ry="10" stroke="#b5564b" stroke-width="4.14" opacity="0.92"/>
<path d="M1124.0 284.0C1123.5 285.3 1122.2 290.0 1121.0 292.0C1119.8 294.0 1117.7 295.3 1117.0 296.0" stroke="#b5564b" stroke-width="3.6799999999999997" opacity="0.92"/>
<path d="M1059.0 295.0C1062.5 294.5 1073.3 293.0 1080.0 292.0C1086.7 291.0 1093.8 288.8 1099.0 289.0C1104.2 289.2 1109.0 292.3 1111.0 293.0" stroke="#b5564b" stroke-width="3.6799999999999997" opacity="0.92"/>
<path d="M1108.0 298.0C1105.8 300.0 1099.8 306.3 1095.0 310.0C1090.2 313.7 1081.7 318.3 1079.0 320.0" stroke="#b5564b" stroke-width="3.2199999999999998" opacity="0.92"/>
<path d="M1110.0 301.0C1108.0 303.3 1102.5 310.5 1098.0 315.0C1093.5 319.5 1085.5 325.8 1083.0 328.0" stroke="#b5564b" stroke-width="3.2199999999999998" opacity="0.92"/>
<path d="M1027.0 322.0C1027.5 319.7 1028.2 311.3 1030.0 308.0C1031.8 304.7 1036.0 300.3 1038.0 302.0C1040.0 303.7 1040.7 312.0 1042.0 318.0C1043.3 324.0 1045.3 334.7 1046.0 338.0" stroke="#b5564b" stroke-width="4.369999999999999" opacity="0.92"/>
<path d="M1036.0 338.0C1039.2 337.3 1048.2 335.2 1055.0 334.0C1061.8 332.8 1073.3 331.5 1077.0 331.0" stroke="#b5564b" stroke-width="3.6799999999999997" opacity="0.92"/>
<path d="M1077.0 331.0C1074.7 335.8 1067.5 349.8 1063.0 360.0C1058.5 370.2 1052.2 386.7 1050.0 392.0" stroke="#b5564b" stroke-width="3.6799999999999997" opacity="0.92"/>
<path d="M1057.0 250.0C1057.2 261.7 1057.7 296.7 1058.0 320.0C1058.3 343.3 1058.8 378.3 1059.0 390.0" stroke="#cf9994" stroke-width="2.5" opacity="0.45"/>
<path d="M1066.0 265.0C1065.8 272.5 1065.5 294.2 1065.0 310.0C1064.5 325.8 1063.3 351.7 1063.0 360.0" stroke="#cf9994" stroke-width="7.5" opacity="0.35"/>
<path d="M1053.0 300.0C1052.5 305.0 1052.2 320.0 1050.0 330.0C1047.8 340.0 1041.7 355.0 1040.0 360.0" stroke="#cf9994" stroke-width="5.0" opacity="0.3"/>
<path d="M815.0 434.0C815.7 442.3 816.8 471.0 819.0 484.0C821.2 497.0 827.2 505.5 828.0 512.0C828.8 518.5 828.7 519.5 824.0 523.0C819.3 526.5 818.0 530.8 800.0 533.0C782.0 535.2 730.0 535.5 716.0 536.0" stroke="#cf9994" stroke-width="3.0" opacity="0.45"/>
<path d="M707.0 522.0C715.8 522.3 742.8 523.5 760.0 524.0C777.2 524.5 801.7 524.8 810.0 525.0" stroke="#cf9994" stroke-width="2.5" opacity="0.4"/>
<path d="M706 445L710 470" stroke="#cf9994" stroke-width="3.75" opacity="0.5"/>
<path d="M706.0 486.0C747.2 486.3 872.7 486.5 953.0 488.0C1033.3 489.5 1148.8 493.8 1188.0 495.0" stroke="#d9aaa6" stroke-width="5.5" opacity="0.35"/>
<path d="M875.5 467.0C877.1 497.5 881.4 584.5 885.0 650.0C888.6 715.5 895.0 825.0 897.0 860.0" stroke="#d9aaa6" stroke-width="7.15" opacity="0.45"/>
<path d="M1182.0 515.0C1182.0 545.8 1181.5 642.5 1182.0 700.0C1182.5 757.5 1184.5 833.3 1185.0 860.0" stroke="#d9aaa6" stroke-width="6.6000000000000005" opacity="0.35"/>
<path d="M1175 510L1180 700" stroke="#cf9994" stroke-width="1.875" opacity="0.3"/>
<path d="M940 441L942 446" stroke="#d9aaa6" stroke-width="4.4" opacity="0.3"/>
<path d="M783.0 624.0C785.8 616.7 790.5 594.8 800.0 580.0C809.5 565.2 826.3 545.7 840.0 535.0C853.7 524.3 865.3 517.2 882.0 516.0C898.7 514.8 922.0 520.7 940.0 528.0C958.0 535.3 978.3 548.0 990.0 560.0C1001.7 572.0 1006.7 593.3 1010.0 600.0" stroke="#a07674" stroke-width="2.9899999999999998" opacity="0.45"/>
<path d="M789.0 603.0C795.8 598.8 817.3 583.8 830.0 578.0C842.7 572.2 844.5 565.3 865.0 568.0C885.5 570.7 930.5 584.5 953.0 594.0C975.5 603.5 992.2 619.8 1000.0 625.0" stroke="#a07674" stroke-width="3.4499999999999997" opacity="0.4"/>
<path d="M780.0 610.0C786.7 616.7 800.0 641.7 820.0 650.0C840.0 658.3 876.7 660.0 900.0 660.0C923.3 660.0 943.3 653.3 960.0 650.0C976.7 646.7 993.3 641.7 1000.0 640.0" stroke="#a07674" stroke-width="2.53" opacity="0.35"/>
<path d="M840.0 560.0C850.0 557.5 880.0 545.0 900.0 545.0C920.0 545.0 943.3 552.5 960.0 560.0C976.7 567.5 993.3 585.0 1000.0 590.0" stroke="#a07674" stroke-width="2.3" opacity="0.3"/>
<path d="M953.0 533.0C957.5 535.5 972.2 543.5 980.0 548.0C987.8 552.5 996.7 558.0 1000.0 560.0" stroke="#cf9994" stroke-width="2.5" opacity="0.35"/>
<path d="M953.0 580.0C957.5 583.3 972.2 594.2 980.0 600.0C987.8 605.8 996.7 612.5 1000.0 615.0" stroke="#cf9994" stroke-width="2.5" opacity="0.35"/>
<path d="M953.0 610.0C956.7 613.3 967.2 623.3 975.0 630.0C982.8 636.7 995.8 646.7 1000.0 650.0" stroke="#cf9994" stroke-width="2.5" opacity="0.3"/>
<path d="M703.0 560.0C715.8 565.0 755.5 581.7 780.0 590.0C804.5 598.3 838.3 606.7 850.0 610.0" stroke="#cf9994" stroke-width="2.5" opacity="0.35"/>
<path d="M706.0 600.0C721.7 601.7 758.8 607.5 800.0 610.0C841.2 612.5 927.5 614.2 953.0 615.0" stroke="#cf9994" stroke-width="2.5" opacity="0.35"/>
<path d="M706.0 640.0C721.7 638.3 758.8 630.0 800.0 630.0C841.2 630.0 927.5 638.3 953.0 640.0" stroke="#cf9994" stroke-width="2.5" opacity="0.3"/>
<path d="M703.0 755.0C716.8 750.5 758.5 736.8 786.0 728.0C813.5 719.2 840.2 709.2 868.0 702.0C895.8 694.8 931.0 690.3 953.0 685.0C975.0 679.7 992.2 672.5 1000.0 670.0" stroke="#cf9994" stroke-width="3.0" opacity="0.5"/>
<path d="M703.0 722.0C719.2 727.0 758.3 739.8 800.0 752.0C841.7 764.2 919.7 786.2 953.0 795.0C986.3 803.8 992.2 803.3 1000.0 805.0" stroke="#cf9994" stroke-width="2.75" opacity="0.5"/>
<path d="M703.0 735.0C719.2 740.0 770.8 755.0 800.0 765.0C829.2 775.0 865.0 790.0 878.0 795.0" stroke="#cf9994" stroke-width="2.75" opacity="0.45"/>
<path d="M703.0 757.0C715.8 762.5 755.8 779.3 780.0 790.0C804.2 800.7 836.7 815.8 848.0 821.0" stroke="#cf9994" stroke-width="2.75" opacity="0.45"/>
<path d="M703.0 712.0C719.2 716.7 770.8 731.5 800.0 740.0C829.2 748.5 852.5 754.7 878.0 763.0C903.5 771.3 940.5 785.5 953.0 790.0" stroke="#cf9994" stroke-width="2.5" opacity="0.35"/>
<path d="M870.0 705.0C878.3 704.2 898.3 702.5 920.0 700.0C941.7 697.5 986.7 691.7 1000.0 690.0" stroke="#cf9994" stroke-width="2.5" opacity="0.35"/>
<path d="M860.0 866.0C856.7 861.7 842.5 849.3 840.0 840.0C837.5 830.7 840.0 817.5 845.0 810.0C850.0 802.5 862.7 796.7 870.0 795.0C877.3 793.3 885.8 799.2 889.0 800.0" stroke="#a07674" stroke-width="2.875" opacity="0.4"/>
<path d="M875.0 866.0C872.2 861.7 859.7 848.5 858.0 840.0C856.3 831.5 859.8 820.3 865.0 815.0C870.2 809.7 885.0 809.2 889.0 808.0" stroke="#a07674" stroke-width="2.3" opacity="0.35"/>
<path d="M703.0 782.0C707.2 787.5 719.8 800.8 728.0 815.0C736.2 829.2 748.0 858.3 752.0 867.0" stroke="#aa3f35" stroke-width="2.76" opacity="0.9"/>
<path d="M999.0 652.0C1003.0 654.3 1014.2 662.8 1023.0 666.0C1031.8 669.2 1041.3 670.2 1052.0 671.0C1062.7 671.8 1075.5 671.8 1087.0 671.0C1098.5 670.2 1111.7 668.8 1121.0 666.0C1130.3 663.2 1139.3 656.0 1143.0 654.0" stroke="#7f2d25" stroke-width="4.9399999999999995" opacity="0.85"/>
<path d="M1000.0 648.0C1004.2 650.0 1015.8 657.2 1025.0 660.0C1034.2 662.8 1044.2 664.3 1055.0 665.0C1065.8 665.7 1077.5 665.7 1090.0 664.0C1102.5 662.3 1123.3 656.5 1130.0 655.0" stroke="#7f2d25" stroke-width="2.6" opacity="0.6"/>
<path d="M1023.0 630.0C1029.2 632.3 1049.8 642.0 1060.0 644.0C1070.2 646.0 1073.8 641.2 1084.0 642.0C1094.2 642.8 1110.8 647.3 1121.0 649.0C1131.2 650.7 1141.0 651.5 1145.0 652.0" stroke="#7f2d25" stroke-width="3.9000000000000004" opacity="0.8"/>
<path d="M1030.0 635.0C1033.3 637.5 1040.8 647.2 1050.0 650.0C1059.2 652.8 1073.3 651.2 1085.0 652.0C1096.7 652.8 1114.2 654.5 1120.0 655.0" stroke="#7f2d25" stroke-width="2.6" opacity="0.5"/>
<path d="M1031.0 674.0C1030.2 682.0 1025.3 706.7 1026.0 722.0C1026.7 737.3 1030.2 750.5 1035.0 766.0C1039.8 781.5 1050.5 804.0 1055.0 815.0C1059.5 826.0 1062.5 823.5 1062.0 832.0C1061.5 840.5 1053.7 860.3 1052.0 866.0" stroke="#7f2d25" stroke-width="7.15" opacity="0.9"/>
<path d="M1040.0 683.0C1041.3 692.5 1045.0 722.2 1048.0 740.0C1051.0 757.8 1054.0 769.0 1058.0 790.0C1062.0 811.0 1069.7 853.3 1072.0 866.0" stroke="#8c4a44" stroke-width="4.8" opacity="0.45"/>
<path d="M1067.0 700.0C1069.5 695.2 1077.2 693.7 1082.0 693.0C1086.8 692.3 1091.7 693.2 1096.0 696.0C1100.3 698.8 1104.7 705.2 1108.0 710.0C1111.3 714.8 1113.0 722.2 1116.0 725.0C1119.0 727.8 1122.8 725.0 1126.0 727.0C1129.2 729.0 1134.2 732.5 1135.0 737.0C1135.8 741.5 1133.3 750.3 1131.0 754.0C1128.7 757.7 1126.8 758.5 1121.0 759.0C1115.2 759.5 1103.3 759.8 1096.0 757.0C1088.7 754.2 1081.8 747.8 1077.0 742.0C1072.2 736.2 1068.7 729.0 1067.0 722.0C1065.3 715.0 1064.5 704.8 1067.0 700.0Z" stroke="#7f2d25" stroke-width="5.460000000000001" opacity="0.85"/>
<path d="M1074.0 705.0C1076.0 702.2 1082.0 699.8 1086.0 701.0C1090.0 702.2 1094.7 707.2 1098.0 712.0C1101.3 716.8 1102.2 725.0 1106.0 730.0C1109.8 735.0 1119.2 738.3 1121.0 742.0C1122.8 745.7 1120.8 750.7 1117.0 752.0C1113.2 753.3 1103.8 752.7 1098.0 750.0C1092.2 747.3 1086.0 741.3 1082.0 736.0C1078.0 730.7 1075.3 723.2 1074.0 718.0C1072.7 712.8 1072.0 707.8 1074.0 705.0Z" stroke="#7f2d25" stroke-width="3.12" opacity="0.65"/>
<path d="M1063.0 705.0C1063.2 710.0 1060.3 727.2 1064.0 735.0C1067.7 742.8 1077.3 747.5 1085.0 752.0C1092.7 756.5 1105.8 760.3 1110.0 762.0" stroke="#7f2d25" stroke-width="2.6" opacity="0.5"/>
<path d="M1145.0 657.0C1147.8 663.0 1157.2 678.8 1162.0 693.0C1166.8 707.2 1170.7 725.7 1174.0 742.0C1177.3 758.3 1179.5 770.7 1182.0 791.0C1184.5 811.3 1187.8 851.8 1189.0 864.0" stroke="#7f2d25" stroke-width="4.680000000000001" opacity="0.85"/>
<path d="M1152.0 654.0C1155.3 662.5 1164.8 688.2 1172.0 705.0C1179.2 721.8 1190.2 740.8 1195.0 755.0C1199.8 769.2 1200.0 784.2 1201.0 790.0" stroke="#7f2d25" stroke-width="4.16" opacity="0.8"/>
<path d="M1140.0 670.0C1143.3 681.7 1153.7 718.3 1160.0 740.0C1166.3 761.7 1174.7 779.0 1178.0 800.0C1181.3 821.0 1179.7 855.0 1180.0 866.0" stroke="#7f2d25" stroke-width="2.6" opacity="0.55"/>
<path d="M1077.0 835.0C1082.2 830.0 1096.7 813.2 1108.0 805.0C1119.3 796.8 1129.5 791.7 1145.0 786.0C1160.5 780.3 1191.7 773.5 1201.0 771.0" stroke="#7f2d25" stroke-width="4.9399999999999995" opacity="0.85"/>
<path d="M1087.0 822.0C1094.2 818.3 1112.8 806.2 1130.0 800.0C1147.2 793.8 1180.0 787.5 1190.0 785.0" stroke="#7f2d25" stroke-width="2.8600000000000003" opacity="0.6"/>
<path d="M1060.0 760.0C1066.7 761.7 1085.0 765.8 1100.0 770.0C1115.0 774.2 1132.8 776.7 1150.0 785.0C1167.2 793.3 1194.2 814.2 1203.0 820.0" stroke="#7f2d25" stroke-width="3.12" opacity="0.6"/>
<path d="M1160.0 740.0C1164.2 736.7 1178.2 726.7 1185.0 720.0C1191.8 713.3 1198.3 703.3 1201.0 700.0" stroke="#7f2d25" stroke-width="3.3800000000000003" opacity="0.6"/>
<path d="M1180.0 800.0C1182.5 793.3 1191.5 773.3 1195.0 760.0C1198.5 746.7 1200.0 726.7 1201.0 720.0" stroke="#7f2d25" stroke-width="3.6399999999999997" opacity="0.6"/>
<path d="M1100.0 740.0C1106.7 743.3 1127.5 751.7 1140.0 760.0C1152.5 768.3 1165.0 783.3 1175.0 790.0C1185.0 796.7 1195.8 798.3 1200.0 800.0" stroke="#7f2d25" stroke-width="2.8600000000000003" opacity="0.55"/>
<path d="M1013.0 611.0C1011.2 604.8 1002.5 587.5 1002.0 574.0C1001.5 560.5 1004.5 541.5 1010.0 530.0C1015.5 518.5 1026.0 510.3 1035.0 505.0C1044.0 499.7 1053.2 497.8 1064.0 498.0C1074.8 498.2 1090.3 499.8 1100.0 506.0C1109.7 512.2 1117.7 525.3 1122.0 535.0C1126.3 544.7 1126.7 553.2 1126.0 564.0C1125.3 574.8 1123.7 591.2 1118.0 600.0C1112.3 608.8 1102.5 612.7 1092.0 617.0C1081.5 621.3 1067.0 627.0 1055.0 626.0C1043.0 625.0 1025.8 613.5 1020.0 611.0" stroke="#7f2d25" stroke-width="4.9399999999999995" opacity="0.88"/>
<path d="M1005.0 600.0C1004.2 593.3 998.3 573.3 1000.0 560.0C1001.7 546.7 1007.5 530.0 1015.0 520.0C1022.5 510.0 1034.2 503.7 1045.0 500.0C1055.8 496.3 1069.2 496.3 1080.0 498.0C1090.8 499.7 1105.0 508.0 1110.0 510.0" stroke="#7f2d25" stroke-width="3.12" opacity="0.6"/>
<path d="M1003.0 574.0C1004.8 580.2 1010.7 600.0 1014.0 611.0C1017.3 622.0 1018.7 633.7 1023.0 640.0C1027.3 646.3 1031.5 648.2 1040.0 649.0C1048.5 649.8 1068.3 645.7 1074.0 645.0" stroke="#7f2d25" stroke-width="4.16" opacity="0.8"/>
<path d="M1115.0 508.0C1117.5 514.3 1127.8 531.8 1130.0 546.0C1132.2 560.2 1129.5 579.0 1128.0 593.0C1126.5 607.0 1122.2 623.8 1121.0 630.0" stroke="#7f2d25" stroke-width="3.9000000000000004" opacity="0.8"/>
<path d="M1118.0 520.0C1120.8 525.0 1132.5 536.7 1135.0 550.0C1137.5 563.3 1133.3 591.7 1133.0 600.0" stroke="#7f2d25" stroke-width="2.6" opacity="0.5"/>
<path d="M1001.0 591.0C1010.0 589.3 1036.8 583.0 1055.0 581.0C1073.2 579.0 1100.8 579.3 1110.0 579.0" stroke="#7f2d25" stroke-width="4.9399999999999995" opacity="0.85"/>
<path d="M1059.0 506.0C1056.8 512.7 1048.5 533.2 1046.0 546.0C1043.5 558.8 1043.2 570.2 1044.0 583.0C1044.8 595.8 1048.5 612.0 1051.0 623.0C1053.5 634.0 1057.7 644.7 1059.0 649.0" stroke="#7f2d25" stroke-width="3.6399999999999997" opacity="0.8"/>
<path d="M1102.0 546.0C1101.7 553.8 1100.0 576.5 1100.0 593.0C1100.0 609.5 1101.7 636.3 1102.0 645.0" stroke="#7f2d25" stroke-width="4.42" opacity="0.8"/>
<path d="M1059.0 515.0C1061.3 525.0 1068.7 555.8 1073.0 575.0C1077.3 594.2 1083.0 620.8 1085.0 630.0" stroke="#8c4a44" stroke-width="3.12" opacity="0.45"/>
<path d="M1070.0 510.0C1073.3 515.8 1085.0 536.7 1090.0 545.0C1095.0 553.3 1098.3 557.5 1100.0 560.0" stroke="#8c4a44" stroke-width="2.4" opacity="0.35"/>
<path d="M1008.0 540.0C1015.0 544.2 1033.0 555.0 1050.0 565.0C1067.0 575.0 1100.0 594.2 1110.0 600.0" stroke="#8c4a44" stroke-width="2.4" opacity="0.3"/>
<path d="M953.0 660.0C957.5 663.3 972.5 675.0 980.0 680.0C987.5 685.0 995.0 688.3 998.0 690.0" stroke="#cf9994" stroke-width="2.5" opacity="0.35"/>
<path d="M953.0 700.0C959.2 698.3 978.8 690.0 990.0 690.0C1001.2 690.0 1015.0 698.3 1020.0 700.0" stroke="#cf9994" stroke-width="2.5" opacity="0.35"/>
<path d="M960.0 820.0C966.7 816.7 985.0 800.0 1000.0 800.0C1015.0 800.0 1041.7 816.7 1050.0 820.0" stroke="#cf9994" stroke-width="2.5" opacity="0.35"/>
<path d="M1110.0 640.0C1113.3 636.7 1125.0 626.7 1130.0 620.0C1135.0 613.3 1138.3 603.3 1140.0 600.0" stroke="#a07674" stroke-width="3.4499999999999997" opacity="0.35"/>
<path d="M1115.0 690.0C1119.2 688.3 1132.5 680.0 1140.0 680.0C1147.5 680.0 1156.7 688.3 1160.0 690.0" stroke="#a07674" stroke-width="3.4499999999999997" opacity="0.3"/>
<path d="M1034.0 680.0C1033.3 687.5 1029.0 710.0 1030.0 725.0C1031.0 740.0 1035.3 754.2 1040.0 770.0C1044.7 785.8 1055.0 811.7 1058.0 820.0" stroke="#7f2d25" stroke-width="2.8600000000000003" opacity="0.55"/>
<path d="M1140.0 650.0C1143.0 656.7 1153.0 674.2 1158.0 690.0C1163.0 705.8 1166.7 726.7 1170.0 745.0C1173.3 763.3 1175.5 779.8 1178.0 800.0C1180.5 820.2 1183.8 855.0 1185.0 866.0" stroke="#7f2d25" stroke-width="2.8600000000000003" opacity="0.55"/>
<path d="M1160.0 655.0C1164.2 662.5 1178.3 685.0 1185.0 700.0C1191.7 715.0 1197.5 737.5 1200.0 745.0" stroke="#7f2d25" stroke-width="3.3800000000000003" opacity="0.6"/>
<path d="M1150.0 700.0C1154.2 703.3 1167.5 712.5 1175.0 720.0C1182.5 727.5 1190.3 738.3 1195.0 745.0C1199.7 751.7 1201.7 757.5 1203.0 760.0" stroke="#7f2d25" stroke-width="4.55" opacity="0.55"/>
<path d="M1165.0 760.0C1168.3 757.5 1178.7 748.3 1185.0 745.0C1191.3 741.7 1200.0 740.8 1203.0 740.0" stroke="#7f2d25" stroke-width="3.9000000000000004" opacity="0.55"/>
<path d="M1150.0 790.0C1154.2 788.3 1166.7 778.3 1175.0 780.0C1183.3 781.7 1195.8 796.7 1200.0 800.0" stroke="#7f2d25" stroke-width="3.25" opacity="0.55"/>
<path d="M1170.0 800.0C1173.3 801.7 1184.5 805.0 1190.0 810.0C1195.5 815.0 1200.8 826.7 1203.0 830.0" stroke="#7f2d25" stroke-width="3.9000000000000004" opacity="0.5"/>
<path d="M1000.0 652.0C1005.0 651.7 1020.0 649.5 1030.0 650.0C1040.0 650.5 1049.2 655.0 1060.0 655.0C1070.8 655.0 1081.7 651.7 1095.0 650.0C1108.3 648.3 1132.5 645.8 1140.0 645.0" stroke="#7f2d25" stroke-width="2.6" opacity="0.45"/>
<path d="M1023.0 628.0C1025.8 630.0 1033.0 638.0 1040.0 640.0C1047.0 642.0 1055.0 640.3 1065.0 640.0C1075.0 639.7 1089.2 637.2 1100.0 638.0C1110.8 638.8 1125.0 643.8 1130.0 645.0" stroke="#7f2d25" stroke-width="2.8600000000000003" opacity="0.55"/>
<path d="M1085.0 640.0C1085.8 643.3 1089.5 653.7 1090.0 660.0C1090.5 666.3 1088.3 675.0 1088.0 678.0" stroke="#7f2d25" stroke-width="3.25" opacity="0.6"/>
<path d="M1052.0 630.0C1051.7 633.3 1051.2 643.0 1050.0 650.0C1048.8 657.0 1045.8 668.3 1045.0 672.0" stroke="#7f2d25" stroke-width="2.8600000000000003" opacity="0.5"/>
<path d="M1080.0 830.0C1085.8 825.0 1101.7 808.0 1115.0 800.0C1128.3 792.0 1152.5 785.0 1160.0 782.0" stroke="#7f2d25" stroke-width="2.6" opacity="0.5"/>
<path d="M1100.0 815.0C1108.3 811.7 1132.8 799.2 1150.0 795.0C1167.2 790.8 1194.2 790.8 1203.0 790.0" stroke="#7f2d25" stroke-width="2.6" opacity="0.45"/>
<path d="M1013.0 611.0C1011.5 604.5 1004.2 585.8 1004.0 572.0C1003.8 558.2 1006.0 539.5 1012.0 528.0C1018.0 516.5 1031.0 508.2 1040.0 503.0C1049.0 497.8 1055.7 496.7 1066.0 497.0C1076.3 497.3 1092.3 498.8 1102.0 505.0C1111.7 511.2 1119.7 523.8 1124.0 534.0C1128.3 544.2 1127.3 560.7 1128.0 566.0" stroke="#7f2d25" stroke-width="2.8600000000000003" opacity="0.5"/>
<path d="M1108.0 520.0C1111.3 524.2 1123.0 535.0 1128.0 545.0C1133.0 555.0 1137.0 567.5 1138.0 580.0C1139.0 592.5 1136.2 610.0 1134.0 620.0C1131.8 630.0 1126.5 636.7 1125.0 640.0" stroke="#7f2d25" stroke-width="2.8600000000000003" opacity="0.5"/>
<path d="M1020.0 615.0C1025.0 617.5 1038.3 628.3 1050.0 630.0C1061.7 631.7 1079.2 630.3 1090.0 625.0C1100.8 619.7 1110.8 602.5 1115.0 598.0" stroke="#7f2d25" stroke-width="2.6" opacity="0.55"/>
<path d="M1045.0 515.0C1045.8 522.5 1047.5 542.5 1050.0 560.0C1052.5 577.5 1058.3 610.0 1060.0 620.0" stroke="#8c4a44" stroke-width="2.4" opacity="0.4"/>
<path d="M1020.0 650.0C1023.3 658.3 1035.0 681.7 1040.0 700.0C1045.0 718.3 1046.7 732.3 1050.0 760.0C1053.3 787.7 1058.3 848.3 1060.0 866.0" stroke="#a07674" stroke-width="3.4499999999999997" opacity="0.3"/>
<path d="M960.0 700.0C966.7 698.3 986.7 690.0 1000.0 690.0C1013.3 690.0 1033.3 698.3 1040.0 700.0" stroke="#a07674" stroke-width="2.875" opacity="0.3"/>
<path d="M1130.0 640.0C1133.3 635.0 1145.0 618.3 1150.0 610.0C1155.0 601.7 1158.3 593.3 1160.0 590.0" stroke="#a07674" stroke-width="3.4499999999999997" opacity="0.3"/>
<path d="M1110.0 690.0C1116.7 691.7 1139.2 700.0 1150.0 700.0C1160.8 700.0 1170.8 691.7 1175.0 690.0" stroke="#a07674" stroke-width="2.875" opacity="0.3"/>
<path d="M206.0 658.0C226.2 657.3 278.7 651.2 327.0 654.0C375.3 656.8 433.5 663.8 496.0 675.0C558.5 686.2 667.7 713.3 702.0 721.0" stroke="#c8776f" stroke-width="2.5" opacity="0.55"/>
<path d="M251.0 624.0C277.7 621.2 356.2 612.7 411.0 607.0C465.8 601.3 531.5 594.8 580.0 590.0C628.5 585.2 681.7 580.0 702.0 578.0" stroke="#c8776f" stroke-width="2.5" opacity="0.5"/>
<path d="M234.0 599.0C249.5 594.0 296.0 576.0 327.0 569.0C358.0 562.0 404.5 559.0 420.0 557.0" stroke="#c8776f" stroke-width="2.25" opacity="0.45"/>
<path d="M327.0 641.0C348.0 638.8 403.8 633.7 453.0 628.0C502.2 622.3 580.5 611.8 622.0 607.0C663.5 602.2 688.7 600.3 702.0 599.0" stroke="#c8776f" stroke-width="2.5" opacity="0.45"/>
<path d="M390.0 658.0C414.7 662.2 486.0 673.2 538.0 683.0C590.0 692.8 674.7 711.3 702.0 717.0" stroke="#c8776f" stroke-width="2.25" opacity="0.5"/>
<path d="M453.0 616.0C481.2 620.2 580.5 634.0 622.0 641.0C663.5 648.0 688.7 655.2 702.0 658.0" stroke="#c8776f" stroke-width="2.25" opacity="0.45"/>
<path d="M213.0 650.0C224.8 647.8 251.0 639.8 284.0 637.0C317.0 634.2 389.8 633.7 411.0 633.0" stroke="#c8776f" stroke-width="2.5" opacity="0.4"/>
<path d="M495.0 645.0C516.2 652.8 587.5 679.3 622.0 692.0C656.5 704.7 688.7 716.2 702.0 721.0" stroke="#c8776f" stroke-width="2.0" opacity="0.45"/>
<path d="M428 542L470 550" stroke="#aa3f35" stroke-width="1.38" opacity="0.6"/>
<path d="M504 554L534 561" stroke="#aa3f35" stroke-width="1.38" opacity="0.6"/>
<path d="M462 624L517 650" stroke="#aa3f35" stroke-width="1.38" opacity="0.5"/>
<path d="M212.0 440.0C213.7 466.7 218.5 546.7 222.0 600.0C225.5 653.3 229.5 715.7 233.0 760.0C236.5 804.3 241.3 848.3 243.0 866.0" stroke="#d9aaa6" stroke-width="9.9" opacity="0.3"/>
<path d="M250.0 625.0C258.3 622.8 278.3 613.7 300.0 612.0C321.7 610.3 356.7 613.3 380.0 615.0C403.3 616.7 430.0 620.8 440.0 622.0" stroke="#cf9994" stroke-width="3.75" opacity="0.3"/>
<path d="M863.0 865.0C869.2 858.3 887.2 839.5 900.0 825.0C912.8 810.5 928.3 793.0 940.0 778.0C951.7 763.0 960.5 749.7 970.0 735.0C979.5 720.3 990.0 701.7 997.0 690.0C1004.0 678.3 1009.8 671.2 1012.0 665.0C1014.2 658.8 1010.3 655.0 1010.0 653.0" stroke="#7f2d25" stroke-width="4.680000000000001" opacity="0.85"/>
<path d="M872.0 865.0C883.3 851.7 918.7 812.5 940.0 785.0C961.3 757.5 990.0 714.2 1000.0 700.0" stroke="#7f2d25" stroke-width="2.3400000000000003" opacity="0.45"/>
<path d="M889.0 865.0C895.8 860.0 917.0 844.2 930.0 835.0C943.0 825.8 960.8 814.2 967.0 810.0" stroke="#7f2d25" stroke-width="4.16" opacity="0.85"/>
<path d="M1014 657L1001 688L967 735L941 761" stroke="#7f2d25" stroke-width="3.6399999999999997" opacity="0.85"/>
<path d="M1005.0 650.0C1001.7 658.3 993.3 684.2 985.0 700.0C976.7 715.8 960.0 737.5 955.0 745.0" stroke="#7f2d25" stroke-width="2.3400000000000003" opacity="0.5"/>
<path d="M938.5 752L962 761L979.5 793L1023 739L1030 722" stroke="#7f2d25" stroke-width="4.16" opacity="0.85"/>
<path d="M925.5 776.0C929.2 775.7 940.4 774.7 948.0 774.0C955.6 773.3 967.2 772.3 971.0 772.0" stroke="#7f2d25" stroke-width="3.3800000000000003" opacity="0.85"/>
<path d="M962 802L971 819" stroke="#7f2d25" stroke-width="3.6399999999999997" opacity="0.85"/>
<path d="M918.0 800.0C919.2 797.5 922.7 790.0 925.0 785.0C927.3 780.0 930.8 772.5 932.0 770.0" stroke="#7f2d25" stroke-width="2.3400000000000003" opacity="0.55"/>
<path d="M905 820L915 800" stroke="#7f2d25" stroke-width="2.08" opacity="0.5"/>
<path d="M850.0 703.0C861.7 700.8 896.7 693.3 920.0 690.0C943.3 686.7 978.3 684.2 990.0 683.0" stroke="#cf9994" stroke-width="2.5" opacity="0.45"/>
<path d="M850.0 762.0C860.8 761.0 895.0 756.2 915.0 756.0C935.0 755.8 960.8 760.2 970.0 761.0" stroke="#cf9994" stroke-width="2.5" opacity="0.35"/>
</g>
<rect x="702.5" y="203" width="1.6" height="664" fill="#0a0a0a"/>
</g>
</svg>
<!--/CANVAS-->
<div id="toolbar" class="a">
 <div class="a" style="left:0;top:0;width:27px;height:8px;background:#3b3b3b"></div>
 <svg style="left:3px;top:1px" width="8" height="6" viewBox="0 0 8 6"><path d="M0 0 L3 3 L0 6Z M4 0 L7 3 L4 6Z" fill="#cfcfcf"/></svg>
 <div class="a" style="left:7px;top:13px;width:15px;height:2px;background:repeating-linear-gradient(to right,#3e3e3e 0 2px,#535353 2px 3px)"></div>
</div>
<svg style="left:0;top:62px" width="29" height="480" viewBox="0 62 29 480" fill="#d4d4d4" stroke="none">
 <path d="M24.5 79 V82 H21.5Z" fill="#bdbdbd"/><path d="M24.5 98 V101 H21.5Z" fill="#bdbdbd"/><path d="M24.5 117 V120 H21.5Z" fill="#bdbdbd"/><path d="M24.5 136 V139 H21.5Z" fill="#bdbdbd"/><path d="M24.5 155 V158 H21.5Z" fill="#bdbdbd"/><path d="M24.5 175 V178 H21.5Z" fill="#bdbdbd"/><path d="M24.5 197 V200 H21.5Z" fill="#bdbdbd"/><path d="M24.5 216 V219 H21.5Z" fill="#bdbdbd"/><path d="M24.5 235 V238 H21.5Z" fill="#bdbdbd"/><path d="M24.5 254 V257 H21.5Z" fill="#bdbdbd"/><path d="M24.5 273 V276 H21.5Z" fill="#bdbdbd"/><path d="M24.5 293 V296 H21.5Z" fill="#bdbdbd"/><path d="M24.5 312 V315 H21.5Z" fill="#bdbdbd"/><path d="M24.5 331 V334 H21.5Z" fill="#bdbdbd"/><path d="M24.5 352 V355 H21.5Z" fill="#bdbdbd"/><path d="M24.5 371 V374 H21.5Z" fill="#bdbdbd"/><path d="M24.5 391 V394 H21.5Z" fill="#bdbdbd"/><path d="M24.5 410 V413 H21.5Z" fill="#bdbdbd"/><path d="M24.5 431 V434 H21.5Z" fill="#bdbdbd"/><path d="M24.5 527 V530 H21.5Z" fill="#bdbdbd"/>
 <!-- move -->
 <path d="M8 70 L8 79 L10.5 77 L12 80 L13 79.5 L11.8 76.5 L15 76.2Z"/>
 <path d="M17 74 v8 M13.5 78 h7" stroke="#d4d4d4" stroke-width="1.3"/>
 <!-- marquee -->
 <rect x="8.5" y="90.5" width="11" height="9" fill="none" stroke="#d8d8d8" stroke-width="1.3" stroke-dasharray="3 2"/>
 <!-- lasso -->
 <path d="M8 108 L13 111 L19 107 L19 115 L13 119 L11 117 Z" fill="none" stroke="#cfcfcf" stroke-width="1.3"/>
 <!-- wand -->
 <path d="M9 129 l2 2 l-2 2 l3 0 l1 2 l1-2 l2 0 l-1.5-2 l1.5-2 l-2.5 0 l-1-2 l-1 2z"/><path d="M13 134 L20 140" stroke="#d4d4d4" stroke-width="1.6"/>
 <!-- crop -->
 <path d="M10 146 v11 h11 M7 149 h11 v11" fill="none" stroke="#d8d8d8" stroke-width="1.6"/>
 <!-- eyedropper -->
 <path d="M9 178 L17 170 L19 172 L11 180 L8 181Z"/><path d="M17 168 L21 172" stroke="#d4d4d4" stroke-width="2.5"/>
 <rect x="4" y="183" width="21" height="1" fill="#3e3e3e"/>
 <!-- heal -->
 <path d="M8 198 L16 188 Q19 186 21 189 L13 199 Q10 201 8 198Z" fill="#cfcfcf"/><path d="M7 191 Q5 196 9 198" stroke="#cfcfcf" fill="none"/>
 <!-- brush -->
 <path d="M19 206 L12 213 L14 215 L21 208Z"/><path d="M8 217 Q10 212 13 214 Q13 217 8 217Z"/>
 <!-- stamp -->
 <circle cx="13" cy="227" r="2.3"/><rect x="12" y="228" width="2" height="4"/><path d="M8 232 h10 v3 h-10z"/><path d="M8 236 h10 v1.5 h-10z" fill="#aaa"/>
 <!-- history -->
 <path d="M9 247 Q12 243 17 246 M9 253 Q14 256 18 252" stroke="#cfcfcf" stroke-width="1.5" fill="none"/><path d="M11 252 L19 246" stroke="#e0e0e0" stroke-width="2"/>
 <!-- eraser selected -->
 <rect x="3" y="263" width="22" height="16" fill="#3c3c3c" rx="1"/>
 <path d="M8 273 L15 266 L20 267.5 L13 275Z" fill="#dcdcdc"/><path d="M8 273 L13 275 L13 277 L8 275Z" fill="#bdbdbd"/>
 <!-- gradient -->
 <rect x="7.5" y="285.5" width="12" height="9" fill="url(#grd)" stroke="#d0d0d0"/>
 <defs><linearGradient id="grd"><stop offset="0" stop-color="#f0f0f0"/><stop offset="1" stop-color="#505050"/></linearGradient></defs>
 <!-- blur -->
 <path d="M10 313 Q8 306 13 304 Q18 303 19 307 Q19 311 14 313 L11 315Z"/>
 <!-- dodge -->
 <circle cx="13" cy="327" r="3.5"/><path d="M15 330 L19 334" stroke="#d4d4d4" stroke-width="2"/>
 <rect x="4" y="339.5" width="21" height="1" fill="#3e3e3e"/>
 <!-- pen -->
 <path d="M8 354 L10 347 L17 343 L20 346 L16 353Z"/><circle cx="14" cy="349" r="1" fill="#535353"/>
 <!-- type -->
 <path d="M8.5 363.5 h10 v2 h-1 v-1 h-3 v9 h1.5 v1 h-5 v-1 h1.5 v-9 h-3 v1 h-1z"/>
 <!-- path select -->
 <path d="M10 382 L10 394 L12.5 391.5 L15 396 L16.5 395 L14 390.5 L18 390Z" fill="none" stroke="#d4d4d4" stroke-width="1.2"/>
 <!-- shape -->
 <rect x="7.5" y="403.5" width="12" height="8" fill="#8e8e8e" stroke="#d4d4d4"/>
 <rect x="4" y="418.5" width="21" height="1" fill="#3e3e3e"/>
 <!-- hand -->
 <path d="M8 429 v-4 q1-1 2 0 v3 v-5 q1-1 2 0 v5 v-6 q1-1 2 0 v6 v-5 q1-1 2 0 v6 l2-2 q1.5 0 1 1.5 l-3 5 h-7 z"/>
 <!-- zoom -->
 <circle cx="12" cy="446" r="3.8" fill="none" stroke="#dcdcdc" stroke-width="1.8"/><path d="M15 449 L19 453" stroke="#dcdcdc" stroke-width="2"/>
 <!-- swap -->
 <rect x="3" y="461" width="4" height="4" fill="#1a1a1a" stroke="#ddd" stroke-width="0.8"/>
 <path d="M16 460 q4 0 4 4 M15 460 l2-1.5v3z M20 465 l-1.5-2h3z" stroke="#d4d4d4" fill="#d4d4d4" stroke-width="0.9"/>
 <!-- colors -->
 <rect x="10.5" y="478.5" width="14" height="14" fill="#fff" stroke="#222"/>
 <rect x="4.5" y="472.5" width="12" height="12" fill="#b6564c" stroke="#1a1a1a"/>
 <!-- quick mask -->
 <rect x="7.5" y="501.5" width="12" height="8" fill="#2a2a2a" stroke="#dcdcdc"/><circle cx="13.5" cy="505.5" r="2.5" fill="#dcdcdc"/>
 <!-- screen mode -->
 <rect x="10.5" y="518.5" width="9" height="6" fill="#bdbdbd" stroke="#dcdcdc"/><rect x="7.5" y="521.5" width="9" height="6" fill="#c8c8c8" stroke="#dcdcdc"/>
</svg>
<div class="a" style="left:28px;top:47px;width:2px;height:974px;background:#3a3a3a"></div>
<div id="status" class="a" style="background:linear-gradient(#3e3e3e,#4a4a4a)">
 <div class="a" style="left:36px;top:0;width:149px;height:12px;background:#535353"></div>
 <span class="txt" style="left:10px;top:1px;color:#fff;font-size:7.6px">25%</span>
 <svg style="left:40px;top:1px" width="12" height="10" viewBox="0 0 12 10"><path d="M1 4 v5 h8 v-2" stroke="#ccc" fill="none" stroke-width="1.2"/><path d="M4 7 Q5 3 9 3 v-2 l3 3 l-3 3 v-2 Q6 5 4 7Z" fill="#ddd"/></svg>
 <span class="txt" style="left:82px;top:1px;color:#f0f0f0;font-size:7.3px">Doc: 55.6M/278.1M</span>
 <div class="a" style="left:178px;top:3px;width:0;height:0;border-top:3.5px solid transparent;border-bottom:3.5px solid transparent;border-left:5px solid #e6e6e6"></div>
</div>
<div id="dockR" class="a"></div>
<div class="a" style="left:1377px;top:1009px;width:13px;height:12px;background:#535353"></div>
<div class="a" style="left:1390px;top:46px;width:210px;height:975px;background:#333"></div>
<div id="dock1" class="a"></div>
<div id="dock" class="a" style="background:#383838">
 <!-- header strip -->
 <div class="a" style="left:-29px;top:0;width:208px;height:10px;background:#3a3a3a"></div>
 <svg style="left:166px;top:2px" width="9" height="6" viewBox="0 0 9 6"><path d="M0 0 L3.5 3 L0 6Z M4.5 0 L8 3 L4.5 6Z" fill="#cfcfcf"/></svg>
 <!-- color panel tab row -->
 <div class="a" style="left:0;top:10px;width:178px;height:12px;background:#3c3c3c"></div>
 <div class="a" style="left:0;top:10px;width:73px;height:12px;background:#535353"></div>
 <svg style="left:160px;top:12px" width="14" height="8" viewBox="0 0 14 8"><path d="M0 3 L4 3 L2 5Z" fill="#cfcfcf"/><rect x="5" y="0" width="8" height="8" fill="#8a8a8a"/><path d="M5 2.5h8M5 5h8" stroke="#3c3c3c" stroke-width="0.8"/></svg>
 <!-- color panel body -->
 <div class="a" style="left:0;top:22px;width:177px;height:468px;background:#535353"></div>
 <div class="a" style="left:34px;top:27px;width:106px;height:459px;background:linear-gradient(to top,#000,rgba(0,0,0,0)),linear-gradient(to right,#fff,#ff2408)"></div>
 <svg style="left:84px;top:177px" width="12" height="12" viewBox="0 0 12 12"><circle cx="6" cy="6" r="4.2" fill="none" stroke="#f0f0f0" stroke-width="1.1"/></svg>
 <div class="a" style="left:152px;top:27px;width:15px;height:459px;background:linear-gradient(#f00 0%,#f0f 16.67%,#00f 33.33%,#0ff 50%,#0f0 66.67%,#ff0 83.33%,#f00 100%)"></div>
 <svg style="left:145px;top:473px" width="7" height="9" viewBox="0 0 7 9"><path d="M0 1.5 Q0 0 1.5 0 H3 L6.5 4.5 L3 9 H1.5 Q0 9 0 7.5Z" fill="#e8e8e8"/></svg>
 <!-- layers tab row -->
 <div class="a" style="left:0;top:492px;width:177px;height:13px;background:#3a3a3a"></div>
 <div class="a" style="left:0;top:492px;width:32px;height:13px;background:#535353"></div>
 <div class="a" style="left:32px;top:492px;width:43px;height:13px;background:#434343;border-right:1px solid #353535"></div>
 <div class="a" style="left:75px;top:492px;width:29px;height:13px;background:#434343;border-right:1px solid #353535"></div>
 <span class="txt" style="left:5px;top:495px;font-size:8px;color:#f4f4f4">Layers</span>
 <span class="txt" style="left:37px;top:495px;font-size:8px;color:#a8a8a8">Channels</span>
 <span class="txt" style="left:80px;top:495px;font-size:8px;color:#a8a8a8">Paths</span>
 <svg style="left:160px;top:495px" width="14" height="8" viewBox="0 0 14 8"><path d="M0 3 L4 3 L2 5Z" fill="#cfcfcf"/><rect x="5" y="0" width="8" height="8" fill="#8a8a8a"/><path d="M5 2.5h8M5 5h8" stroke="#3c3c3c" stroke-width="0.8"/></svg>
 <!-- layers body -->
 <div class="a" style="left:0;top:505px;width:177px;height:64px;background:#535353"></div>
 <div class="btn" style="left:3px;top:509px;width:67px;height:13px;background:#5a5a5a;border-color:#404040"></div>
 <svg style="left:8px;top:511px" width="8" height="9" viewBox="0 0 8 9"><circle cx="5" cy="3.2" r="2.5" fill="none" stroke="#ddd" stroke-width="1.2"/><path d="M3 5 L0.5 8" stroke="#ddd" stroke-width="1.4"/></svg>
 <span class="txt" style="left:18px;top:511px;font-size:8.5px;color:#eee">Kind</span>
 <svg style="left:62px;top:511px" width="5" height="9" viewBox="0 0 5 9"><path d="M0 3.5 L2.5 1 L5 3.5Z M0 5.5 L2.5 8 L5 5.5Z" fill="#ddd"/></svg>
 <svg style="left:78px;top:510px" width="100" height="14" viewBox="0 0 100 14">
  <rect x="0.5" y="1.5" width="10" height="9" fill="none" stroke="#d0d0d0"/><path d="M2 9 L5 5 L7 7 L9 4 V9Z" fill="#d0d0d0"/>
  <circle cx="21.5" cy="6" r="4.5" fill="#d0d0d0"/><path d="M19 8.5 L24 3.5" stroke="#535353" stroke-width="1.2"/>
  <path d="M34 1.5 h9 v2.5 h-1 v-1 h-2.5 v7.5 h1.5 v1 h-5 v-1 h1.5 v-7.5 h-2.5 v1 h-1z" fill="#d0d0d0"/>
  <rect x="53.5" y="2.5" width="8" height="8" fill="none" stroke="#d0d0d0" stroke-width="1.2"/><rect x="52" y="1" width="3" height="3" fill="#d0d0d0"/><rect x="60" y="1" width="3" height="3" fill="#d0d0d0"/><rect x="52" y="9" width="3" height="3" fill="#d0d0d0"/><rect x="60" y="9" width="3" height="3" fill="#d0d0d0"/>
  <path d="M71 12 V6 h3 V3 q0-2 2-2 h2 l2 2 v9z" fill="#d0d0d0"/>
  <rect x="89" y="0" width="7" height="13" fill="#3a3a3a"/><rect x="89" y="0" width="7" height="5" fill="#7a7a7a"/>
 </svg>
 <div class="a" style="left:0;top:526px;width:177px;height:1px;background:#454545"></div>
 <div class="btn" style="left:3px;top:530px;width:97px;height:14px;background:#5a5a5a;border-color:#404040"></div>
 <span class="txt" style="left:8px;top:532px;font-size:8.5px;color:#eee">Normal</span>
 <svg style="left:92px;top:532px" width="5" height="9" viewBox="0 0 5 9"><path d="M0 3.5 L2.5 1 L5 3.5Z M0 5.5 L2.5 8 L5 5.5Z" fill="#ddd"/></svg>
 <span class="txt" style="left:105px;top:532px;font-size:8.5px">Opacity:</span>
 <div class="inp" style="left:136px;top:530px;width:26px;height:14px"></div>
 <span class="txt" style="left:139px;top:532px;font-size:8.5px;color:#fff">100%</span>
 <div class="a" style="left:161px;top:530px;width:13px;height:14px;background:#666;border-radius:0 2px 2px 0"></div>
 <div class="a" style="left:165px;top:536px;width:0;height:0;border-left:2.5px solid transparent;border-right:2.5px solid transparent;border-top:3px solid #e6e6e6"></div>
 <div class="a" style="left:0;top:547px;width:177px;height:1px;background:#454545"></div>
 <span class="txt" style="left:5px;top:553px;font-size:8.5px">Lock:</span>
 <svg style="left:28px;top:550px" width="60" height="14" viewBox="0 0 60 14">
  <rect x="1" y="2" width="9" height="9" fill="#bdbdbd"/><path d="M1 2h3v3h-3zM7 2h3v3h-3zM4 5h3v3h-3zM1 8h3v3h-3zM7 8h3v3h-3z" fill="#8a8a8a"/>
  <path d="M16 11 Q17 8 20 9 Q20 12 16 11Z M19 9 L26 2" stroke="#d0d0d0" stroke-width="1.4" fill="#d0d0d0"/>
  <path d="M38 1 v11 M32.5 6.5 h11" stroke="#d0d0d0" stroke-width="1.4"/><path d="M38 0 l-2 2h4z M38 13 l-2-2h4z M32 6.5 l2-2v4z M44 6.5 l-2-2v4z" fill="#d0d0d0"/>
  <rect x="49" y="6" width="8" height="6" fill="#d0d0d0"/><path d="M50.5 6 V4 q0-2.5 2.5-2.5 q2.5 0 2.5 2.5 V6" fill="none" stroke="#d0d0d0" stroke-width="1.3"/>
 </svg>
 <span class="txt" style="left:122px;top:553px;font-size:8.5px">Fill:</span>
 <div class="inp" style="left:136px;top:551px;width:26px;height:13px"></div>
 <span class="txt" style="left:139px;top:553px;font-size:8.5px;color:#fff">100%</span>
 <div class="a" style="left:161px;top:551px;width:13px;height:13px;background:#666;border-radius:0 2px 2px 0"></div>
 <div class="a" style="left:165px;top:556px;width:0;height:0;border-left:2.5px solid transparent;border-right:2.5px solid transparent;border-top:3px solid #e6e6e6"></div>
 <!-- layer list -->
 <div class="a" style="left:0;top:568px;width:167px;height:392px;background:#484848"></div>
 <div class="a" style="left:167px;top:568px;width:10px;height:392px;background:#3e3e3e"></div>
 <!--LAYERS-->
<div class="a" style="left:0;top:569px;width:167px;height:17px;background:#535353;border-bottom:1px solid #3c3c3c"></div>
<div class="a" style="left:23px;top:569px;width:1px;height:17px;background:#454545"></div>
<svg style="left:5px;top:573.5px" width="13" height="8" viewBox="0 0 13 8"><path d="M0.5 4 Q6.5 -2 12.5 4 Q6.5 10 0.5 4Z" fill="#d8d8d8"/><circle cx="6.5" cy="4" r="2.2" fill="#535353"/><circle cx="7.2" cy="3.4" r="0.9" fill="#d8d8d8"/></svg>
<svg style="left:26px;top:573.5px" width="6" height="8" viewBox="0 0 6 8"><path d="M0 0 L5 4 L0 8Z" fill="#e0e0e0"/></svg>
<svg style="left:36px;top:572.5px" width="12" height="10" viewBox="0 0 12 10"><path d="M0 1 h4 l1 1 h7 v8 h-12z" fill="#d8d8d8"/><path d="M0 2.5 h12" stroke="#bdbdbd" stroke-width="0.6"/></svg>
<span class="txt" style="left:56px;top:572.5px;font-size:7.6px;color:#f0f0f0">Borders</span>
<div class="a" style="left:0;top:586px;width:167px;height:16px;background:#535353;border-bottom:1px solid #3c3c3c"></div>
<div class="a" style="left:23px;top:586px;width:1px;height:16px;background:#454545"></div>
<svg style="left:5px;top:590.0px" width="13" height="8" viewBox="0 0 13 8"><path d="M0.5 4 Q6.5 -2 12.5 4 Q6.5 10 0.5 4Z" fill="#d8d8d8"/><circle cx="6.5" cy="4" r="2.2" fill="#535353"/><circle cx="7.2" cy="3.4" r="0.9" fill="#d8d8d8"/></svg>
<svg style="left:26px;top:590.0px" width="6" height="8" viewBox="0 0 6 8"><path d="M0 0 L5 4 L0 8Z" fill="#e0e0e0"/></svg>
<svg style="left:36px;top:589.0px" width="12" height="10" viewBox="0 0 12 10"><path d="M0 1 h4 l1 1 h7 v8 h-12z" fill="#d8d8d8"/><path d="M0 2.5 h12" stroke="#bdbdbd" stroke-width="0.6"/></svg>
<span class="txt" style="left:56px;top:589.0px;font-size:7.6px;color:#f0f0f0">Group 4</span>
<div class="a" style="left:0;top:602px;width:167px;height:22px;background:#535353;border-bottom:1px solid #3c3c3c"></div>
<div class="a" style="left:23px;top:602px;width:1px;height:22px;background:#454545"></div>
<svg style="left:5px;top:609.0px" width="13" height="8" viewBox="0 0 13 8"><path d="M0.5 4 Q6.5 -2 12.5 4 Q6.5 10 0.5 4Z" fill="#d8d8d8"/><circle cx="6.5" cy="4" r="2.2" fill="#535353"/><circle cx="7.2" cy="3.4" r="0.9" fill="#d8d8d8"/></svg>
<div class="a" style="left:26px;top:605px;width:24px;height:16px;border:1px solid #1a1a1a;background:#fff;background-image:linear-gradient(45deg,#d6d6d6 25%,transparent 25%,transparent 75%,#d6d6d6 75%),linear-gradient(45deg,#d6d6d6 25%,transparent 25%,transparent 75%,#d6d6d6 75%);background-size:6px 6px;background-position:0 0,3px 3px"></div>
<span class="txt" style="left:57px;top:608.0px;font-size:7.6px;color:#f0f0f0">Layer 19</span>
<div class="a" style="left:0;top:624px;width:167px;height:17px;background:#535353;border-bottom:1px solid #3c3c3c"></div>
<div class="a" style="left:23px;top:624px;width:1px;height:17px;background:#454545"></div>
<svg style="left:5px;top:628.5px" width="13" height="8" viewBox="0 0 13 8"><path d="M0.5 4 Q6.5 -2 12.5 4 Q6.5 10 0.5 4Z" fill="#d8d8d8"/><circle cx="6.5" cy="4" r="2.2" fill="#535353"/><circle cx="7.2" cy="3.4" r="0.9" fill="#d8d8d8"/></svg>
<svg style="left:25px;top:629.5px" width="8" height="6" viewBox="0 0 8 6"><path d="M0 0 H7 L3.5 5Z" fill="#e0e0e0"/></svg>
<svg style="left:35px;top:627.5px" width="14" height="10" viewBox="0 0 14 10"><path d="M0.5 1.5 h4 l1 1 h6 v2 h-11z" fill="#bdbdbd"/><path d="M0.5 9.5 L2 4 H13.5 L12 9.5Z" fill="#dcdcdc"/></svg>
<span class="txt" style="left:56px;top:627.5px;font-size:7.6px;color:#f0f0f0">Group 5</span>
<div class="a" style="left:0;top:641px;width:167px;height:22px;background:#535353;border-bottom:1px solid #3c3c3c"></div>
<div class="a" style="left:23px;top:641px;width:1px;height:22px;background:#454545"></div>
<svg style="left:5px;top:648.0px" width="13" height="8" viewBox="0 0 13 8"><path d="M0.5 4 Q6.5 -2 12.5 4 Q6.5 10 0.5 4Z" fill="#d8d8d8"/><circle cx="6.5" cy="4" r="2.2" fill="#535353"/><circle cx="7.2" cy="3.4" r="0.9" fill="#d8d8d8"/></svg>
<div class="a" style="left:38px;top:644px;width:24px;height:16px;border:1px solid #1a1a1a;background:#fff;background-image:linear-gradient(45deg,#d6d6d6 25%,transparent 25%,transparent 75%,#d6d6d6 75%),linear-gradient(45deg,#d6d6d6 25%,transparent 25%,transparent 75%,#d6d6d6 75%);background-size:6px 6px;background-position:0 0,3px 3px"></div>
<span class="txt" style="left:68px;top:647.0px;font-size:7.6px;color:#f0f0f0">Layer 18</span>
<div class="a" style="left:0;top:663px;width:167px;height:22px;background:#535353;border-bottom:1px solid #3c3c3c"></div>
<div class="a" style="left:23px;top:663px;width:1px;height:22px;background:#454545"></div>
<svg style="left:5px;top:670.0px" width="13" height="8" viewBox="0 0 13 8"><path d="M0.5 4 Q6.5 -2 12.5 4 Q6.5 10 0.5 4Z" fill="#d8d8d8"/><circle cx="6.5" cy="4" r="2.2" fill="#535353"/><circle cx="7.2" cy="3.4" r="0.9" fill="#d8d8d8"/></svg>
<div class="a" style="left:38px;top:666px;width:24px;height:16px;border:1px solid #1a1a1a;background:#fff;background-image:linear-gradient(45deg,#d6d6d6 25%,transparent 25%,transparent 75%,#d6d6d6 75%),linear-gradient(45deg,#d6d6d6 25%,transparent 25%,transparent 75%,#d6d6d6 75%);background-size:6px 6px;background-position:0 0,3px 3px"></div>
<span class="txt" style="left:68px;top:669.0px;font-size:7.6px;color:#f0f0f0">Layer 17</span>
<div class="a" style="left:0;top:685px;width:167px;height:21px;background:#535353;border-bottom:1px solid #3c3c3c"></div>
<div class="a" style="left:23px;top:685px;width:1px;height:21px;background:#454545"></div>
<svg style="left:5px;top:691.5px" width="13" height="8" viewBox="0 0 13 8"><path d="M0.5 4 Q6.5 -2 12.5 4 Q6.5 10 0.5 4Z" fill="#d8d8d8"/><circle cx="6.5" cy="4" r="2.2" fill="#535353"/><circle cx="7.2" cy="3.4" r="0.9" fill="#d8d8d8"/></svg>
<div class="a" style="left:38px;top:688px;width:24px;height:16px;border:1px solid #1a1a1a;background:#fff;background-image:linear-gradient(45deg,#d6d6d6 25%,transparent 25%,transparent 75%,#d6d6d6 75%),linear-gradient(45deg,#d6d6d6 25%,transparent 25%,transparent 75%,#d6d6d6 75%);background-size:6px 6px;background-position:0 0,3px 3px"></div>
<span class="txt" style="left:68px;top:690.5px;font-size:7.6px;color:#f0f0f0">Layer 16</span>
<div class="a" style="left:0;top:706px;width:167px;height:21px;background:#535353;border-bottom:1px solid #3c3c3c"></div>
<div class="a" style="left:24px;top:706px;width:143px;height:20px;background:#6a7b95"></div>
<div class="a" style="left:23px;top:706px;width:1px;height:21px;background:#454545"></div>
<svg style="left:5px;top:712.5px" width="13" height="8" viewBox="0 0 13 8"><path d="M0.5 4 Q6.5 -2 12.5 4 Q6.5 10 0.5 4Z" fill="#d8d8d8"/><circle cx="6.5" cy="4" r="2.2" fill="#535353"/><circle cx="7.2" cy="3.4" r="0.9" fill="#d8d8d8"/></svg>
<div class="a" style="left:38px;top:709px;width:24px;height:16px;border:1px solid #1a1a1a;background:#fff;background-image:linear-gradient(45deg,#d6d6d6 25%,transparent 25%,transparent 75%,#d6d6d6 75%),linear-gradient(45deg,#d6d6d6 25%,transparent 25%,transparent 75%,#d6d6d6 75%);background-size:6px 6px;background-position:0 0,3px 3px"></div>
<div class="a" style="left:36px;top:707px;width:28px;height:20px;border:1px solid #e8e8e8"></div>
<span class="txt" style="left:68px;top:711.5px;font-size:7.6px;color:#f0f0f0">Layer 34</span>
<div class="a" style="left:0;top:727px;width:167px;height:17px;background:#535353;border-bottom:1px solid #3c3c3c"></div>
<div class="a" style="left:23px;top:727px;width:1px;height:17px;background:#454545"></div>
<svg style="left:5px;top:731.5px" width="13" height="8" viewBox="0 0 13 8"><path d="M0.5 4 Q6.5 -2 12.5 4 Q6.5 10 0.5 4Z" fill="#d8d8d8"/><circle cx="6.5" cy="4" r="2.2" fill="#535353"/><circle cx="7.2" cy="3.4" r="0.9" fill="#d8d8d8"/></svg>
<svg style="left:26px;top:731.5px" width="6" height="8" viewBox="0 0 6 8"><path d="M0 0 L5 4 L0 8Z" fill="#e0e0e0"/></svg>
<svg style="left:36px;top:730.5px" width="12" height="10" viewBox="0 0 12 10"><path d="M0 1 h4 l1 1 h7 v8 h-12z" fill="#d8d8d8"/><path d="M0 2.5 h12" stroke="#bdbdbd" stroke-width="0.6"/></svg>
<span class="txt" style="left:56px;top:730.5px;font-size:7.6px;color:#f0f0f0">Group 7</span>
<div class="a" style="left:0;top:744px;width:167px;height:17px;background:#535353;border-bottom:1px solid #3c3c3c"></div>
<div class="a" style="left:23px;top:744px;width:1px;height:17px;background:#454545"></div>
<svg style="left:5px;top:748.5px" width="13" height="8" viewBox="0 0 13 8"><path d="M0.5 4 Q6.5 -2 12.5 4 Q6.5 10 0.5 4Z" fill="#d8d8d8"/><circle cx="6.5" cy="4" r="2.2" fill="#535353"/><circle cx="7.2" cy="3.4" r="0.9" fill="#d8d8d8"/></svg>
<svg style="left:26px;top:748.5px" width="6" height="8" viewBox="0 0 6 8"><path d="M0 0 L5 4 L0 8Z" fill="#e0e0e0"/></svg>
<svg style="left:36px;top:747.5px" width="12" height="10" viewBox="0 0 12 10"><path d="M0 1 h4 l1 1 h7 v8 h-12z" fill="#d8d8d8"/><path d="M0 2.5 h12" stroke="#bdbdbd" stroke-width="0.6"/></svg>
<span class="txt" style="left:56px;top:747.5px;font-size:7.6px;color:#f0f0f0">Group 6</span>
<div class="a" style="left:0;top:761px;width:167px;height:18px;background:#535353;border-bottom:1px solid #3c3c3c"></div>
<div class="a" style="left:23px;top:761px;width:1px;height:18px;background:#454545"></div>
<svg style="left:5px;top:766.0px" width="13" height="8" viewBox="0 0 13 8"><path d="M0.5 4 Q6.5 -2 12.5 4 Q6.5 10 0.5 4Z" fill="#d8d8d8"/><circle cx="6.5" cy="4" r="2.2" fill="#535353"/><circle cx="7.2" cy="3.4" r="0.9" fill="#d8d8d8"/></svg>
<svg style="left:26px;top:766.0px" width="6" height="8" viewBox="0 0 6 8"><path d="M0 0 L5 4 L0 8Z" fill="#e0e0e0"/></svg>
<svg style="left:36px;top:765.0px" width="12" height="10" viewBox="0 0 12 10"><path d="M0 1 h4 l1 1 h7 v8 h-12z" fill="#d8d8d8"/><path d="M0 2.5 h12" stroke="#bdbdbd" stroke-width="0.6"/></svg>
<span class="txt" style="left:56px;top:765.0px;font-size:7.6px;color:#f0f0f0">Group 3</span>
<!--/LAYERS-->
 <!-- bottom bar -->
 <div class="a" style="left:0;top:960px;width:178px;height:15px;background:#535353"></div>
 <svg style="left:26px;top:963px" width="150" height="10" viewBox="0 0 150 10">
  <path d="M3 5 h6" stroke="#bdbdbd" stroke-width="1"/><rect x="0.5" y="2.5" width="5" height="5" rx="2.5" fill="none" stroke="#bdbdbd"/><rect x="6.5" y="2.5" width="5" height="5" rx="2.5" fill="none" stroke="#bdbdbd"/>
  <text x="21" y="8.5" font-family="Liberation Serif" font-style="italic" font-size="10" fill="#cfcfcf">fx</text><rect x="32" y="8" width="1.5" height="1.5" fill="#cfcfcf"/>
  <rect x="40" y="1" width="9" height="8" fill="#d0d0d0"/><circle cx="44.5" cy="5" r="2" fill="#535353"/>
  <circle cx="64.5" cy="5" r="4" fill="#d0d0d0"/><path d="M62 7.5 L67 2.5" stroke="#535353" stroke-width="1"/><rect x="69" y="8" width="1.5" height="1.5" fill="#cfcfcf"/>
  <path d="M80 2 h3.5 l1 1 h4.5 v6 h-9z" fill="#d0d0d0"/>
  <path d="M101 1 h8 v8 h-5 l-3-3z" fill="#d0d0d0"/><path d="M101 6 h3 v3" fill="#8a8a8a"/>
  <path d="M120 3 h9 M122 3 v6 h5 v-6" stroke="#d0d0d0" stroke-width="1.3" fill="#d0d0d0"/><rect x="123" y="1" width="3" height="1.5" fill="#d0d0d0"/>
 </svg>
</div>
<!-- navigator floating panel -->
<div id="nav" class="a" style="left:1303px;top:33px;width:186px;height:187px;background:#535353;box-shadow:0 0 2px #222">
 <div class="a" style="left:0;top:0;width:186px;height:11px;background:#3a3a3a;border-radius:3px 3px 0 0"></div>
 <svg style="left:164px;top:3px" width="8" height="6" viewBox="0 0 8 6"><path d="M3.5 0 L0 3 L3.5 6Z M8 0 L4.5 3 L8 6Z" fill="#cfcfcf"/></svg>
 <svg style="left:177px;top:2px" width="7" height="7" viewBox="0 0 7 7"><path d="M1 1 L6 6 M6 1 L1 6" stroke="#d8d8d8" stroke-width="1.6"/></svg>
 <div class="a" style="left:0;top:11px;width:186px;height:12px;background:#3c3c3c"></div>
 <div class="a" style="left:0;top:11px;width:46px;height:12px;background:#535353"></div>
 <span class="txt" style="left:5px;top:12px;font-size:8.1px;color:#f0f0f0">Navigator</span>
 <svg style="left:172px;top:13px" width="10" height="8" viewBox="0 0 10 8"><path d="M0 3 L4 3 L2 5Z" fill="#cfcfcf"/><rect x="5" y="0" width="5" height="7" fill="#8a8a8a"/></svg>
 <div class="a" style="left:3px;top:35px;width:179px;height:120px;background:#ff2a2a"></div>
 <div class="a" style="left:4px;top:36px;width:177px;height:118px;background-color:#fff;background-image:linear-gradient(45deg,#cbcbcb 25%,transparent 25%,transparent 75%,#cbcbcb 75%),linear-gradient(45deg,#cbcbcb 25%,transparent 25%,transparent 75%,#cbcbcb 75%);background-size:6.6px 6.6px;background-position:0 0,3.3px 3.3px"></div>
 <svg style="left:4px;top:36px" width="177" height="118" viewBox="205 203 998 664" preserveAspectRatio="none"><use href="#ov"/><use href="#ink"/><use href="#ink"/><rect x="702" y="203" width="5" height="664" fill="#666"/></svg>
 <div class="a" style="left:0;top:168px;width:186px;height:13px;background:#4a4a4a;border-top:1px solid #444"></div>
 <div class="a" style="left:0;top:168px;width:44px;height:13px;background:#3c3c3c"></div>
 <span class="txt" style="left:2px;top:170px;font-size:8.5px;color:#fff">25%</span>
 <svg style="left:48px;top:172px" width="10" height="5" viewBox="0 0 10 5"><path d="M1 4 L5 1 L9 4Z" fill="#d0d0d0"/><rect x="0" y="4" width="10" height="1" fill="#d0d0d0"/></svg>
 <div class="a" style="left:65px;top:172px;width:85px;height:3px;background:#3a3a3a;border-radius:2px"></div>
 <svg style="left:95px;top:171px" width="8" height="7" viewBox="0 0 8 7"><path d="M0 6 Q0 3 4 0 Q8 3 8 6Z" fill="#bdbdbd"/></svg>
 <svg style="left:156px;top:171px" width="14" height="6" viewBox="0 0 14 6"><path d="M1 5 L4.5 1 L7 3.5 L9.5 1 L13 5Z" fill="none" stroke="#d0d0d0"/><rect x="0" y="5" width="14" height="1" fill="#d0d0d0"/></svg>
 <div class="a" style="left:0;top:181px;width:186px;height:6px;background:#4a4a4a"></div>
 <div class="a" style="left:88px;top:183px;width:12px;height:2px;background:repeating-linear-gradient(to right,#2e2e2e 0 1px,transparent 1px 2px)"></div>
</div>
<div id="taskbar" class="a">
 <svg style="left:17px;top:13px" width="20" height="20" viewBox="0 0 20 20"><path d="M0 2.8 L8.2 1.6 V9.4 H0Z M9.2 1.4 L19.5 0 V9.4 H9.2Z M0 10.4 H8.2 V18.3 L0 17.1Z M9.2 10.4 H19.5 V20 L9.2 18.5Z" fill="#fff"/></svg>
 <div class="a" style="left:53px;top:0;width:383px;height:45px;background:#f2f2f2"></div>
 <svg style="left:63px;top:12px" width="24" height="24" viewBox="0 0 24 24"><circle cx="12" cy="12" r="10" fill="none" stroke="#111" stroke-width="2.6"/></svg>
 <span class="a" style="left:98px;top:14px;font-size:15.2px;line-height:18px;color:#2a2a2a;white-space:nowrap">Type here to search</span>
 <svg style="left:405px;top:13px" width="14" height="20" viewBox="0 0 14 20"><rect x="4" y="1" width="6" height="11" rx="3" fill="none" stroke="#333" stroke-width="1.3"/><path d="M1.5 9 Q1.5 15 7 15 Q12.5 15 12.5 9 M7 15 V18.5 M4 18.5 H10" fill="none" stroke="#333" stroke-width="1.3"/></svg>
 <svg style="left:451px;top:13px" width="22" height="20" viewBox="0 0 22 20"><path d="M1 1 H14 M1 19 H14 M3 1 V5 M12 1 V5 M3 15 V19 M12 15 V19" stroke="#eee" stroke-width="1.5"/><rect x="1.5" y="5.5" width="12" height="9" fill="none" stroke="#eee" stroke-width="1.5"/><path d="M18.5 1 V19" stroke="#eee" stroke-width="1.6"/><rect x="17" y="8" width="3" height="3" fill="#eee"/></svg>
 <div class="a" style="left:492px;top:0;width:55px;height:42px;background:#3a4132"></div>
 <div class="a" style="left:492px;top:42px;width:55px;height:3px;background:#f4efb4"></div>
 <div class="a" style="left:507px;top:10px;width:25px;height:24px;background:#061f35;border:2px solid #2fc3f2"></div>
 <span class="a" style="left:511px;top:14px;font-size:14px;line-height:14px;color:#3cc8f4;font-weight:bold;letter-spacing:-0.5px">Ps</span>
 <div class="a" style="left:552px;top:42px;width:46px;height:3px;background:#f4efb4"></div>
 <svg style="left:561px;top:13px" width="28" height="22" viewBox="0 0 28 22"><path d="M1 3 Q1 1 3 1 H9 L11 3 H25 Q27 3 27 5 V19 Q27 21 25 21 H3 Q1 21 1 19Z" fill="#f3cf63"/><path d="M1 6 H27 V19 Q27 21 25 21 H3 Q1 21 1 19Z" fill="#fde08a"/><path d="M7 21 V12 H21 V21 H17 V15 H11 V21Z" fill="#2a8fdd"/><rect x="2" y="3" width="6" height="1.5" fill="#fff8d0"/></svg>
 <svg style="left:617px;top:9px" width="26" height="27" viewBox="0 0 26 27"><path d="M8 7 V5 Q8 1 13 1 Q18 1 18 5 V7" fill="none" stroke="#eee" stroke-width="1.8"/><rect x="1" y="7" width="24" height="19" rx="1" fill="#fff"/><rect x="8.5" y="11" width="4" height="4" fill="#f25022"/><rect x="13.5" y="11" width="4" height="4" fill="#7fba00"/><rect x="8.5" y="16" width="4" height="4" fill="#00a4ef"/><rect x="13.5" y="16" width="4" height="4" fill="#ffb900"/></svg>
 <svg style="left:674px;top:10px" width="24" height="26" viewBox="0 0 24 26"><path d="M22 15 H6.5 Q7 20 13 20.5 Q18 20.5 22 18.5 V23 Q18 25 12 25 Q2 24.5 1.5 14 Q1.5 5 9 2 Q5 5 4.5 9 Q7 5.5 12 5.5 Q22 5.5 22 13Z M6.8 11 H16.5 Q16.5 7.5 12 7.5 Q7.5 7.5 6.8 11Z" fill="#1e88e5"/></svg>
 <svg style="left:728px;top:9px" width="27" height="28" viewBox="0 0 27 28"><ellipse cx="13.5" cy="14" rx="12.5" ry="13" fill="#e3192d"/><ellipse cx="13.5" cy="14" rx="5" ry="9.5" fill="#1a1711"/></svg>
 <div class="a" style="left:719px;top:42px;width:46px;height:3px;background:#f4efb4"></div>
 <svg style="left:784px;top:10px" width="26" height="26" viewBox="0 0 26 26"><circle cx="13" cy="13" r="12.5" fill="#db4437"/><path d="M13 13 L2.2 6.8 A12.5 12.5 0 0 0 13 25.5Z" fill="#0f9d58"/><path d="M13 13 L13 25.5 A12.5 12.5 0 0 0 23.8 6.8Z" fill="#f4c20d"/><path d="M13 13 L23.8 6.8 H13Z" fill="#db4437"/><circle cx="13" cy="13" r="6" fill="#fff"/><circle cx="13" cy="13" r="4.6" fill="#4285f4"/></svg>
 <div class="a" style="left:775px;top:42px;width:46px;height:3px;background:#f4efb4"></div>
 <div class="a" style="left:811px;top:42px;width:9px;height:3px;background:#c9c79a"></div>
 <div class="a" style="left:842px;top:15px;width:22px;height:20px;border-radius:3px;background:#7289da"></div>
 <svg style="left:845px;top:19px" width="16" height="12" viewBox="0 0 16 12"><path d="M2 2 Q5 0 7 1 H9 Q11 0 14 2 Q16 6 15 10 Q13 12 11 11 L10 9.5 Q8 10 6 9.5 L5 11 Q3 12 1 10 Q0 6 2 2Z" fill="#fff"/><circle cx="5.5" cy="6" r="1.3" fill="#7289da"/><circle cx="10.5" cy="6" r="1.3" fill="#7289da"/></svg>
 <div class="a" style="left:851px;top:27px;width:16px;height:16px;border-radius:50%;background:#e04545"></div>
 <span class="a" style="left:855px;top:29px;font-size:12px;line-height:12px;color:#fff;font-weight:bold">8</span>
 <div class="a" style="left:830px;top:42px;width:46px;height:3px;background:#f4efb4"></div>
 <div class="a" style="left:894px;top:11px;width:28px;height:28px;border-radius:3px;background:#fff"></div>
 <svg style="left:899px;top:16px" width="18" height="18" viewBox="0 0 18 18"><path d="M9 1.5 Q13 3 16.5 3 Q16 12 9 16.5 Q2 12 1.5 3 Q5 3 9 1.5Z" fill="none" stroke="#e01e1e" stroke-width="2"/></svg>
 <div class="a" style="left:886px;top:42px;width:46px;height:3px;background:#f4efb4"></div>
 <svg style="left:950px;top:10px" width="26" height="26" viewBox="0 0 26 26"><path d="M3 20 L11 4 Q17 1 23 3 L21 22 Q15 24 3 20Z" fill="#9ed0df"/><path d="M3 20 L11 4 Q14 3 16 3 L9 21Z" fill="#5aa6c2"/><path d="M21 22 L23 3 L24 19Z" fill="#d9c26a"/></svg>
 <div class="a" style="left:941px;top:42px;width:46px;height:3px;background:#f4efb4"></div>
 <svg style="left:1348px;top:13px" width="20" height="20" viewBox="0 0 20 20"><circle cx="13" cy="5" r="3.2" fill="none" stroke="#eee" stroke-width="1.3"/><path d="M8.5 13 Q9.5 8.5 13 8.5 Q16.5 8.5 18 13" fill="none" stroke="#eee" stroke-width="1.3"/><circle cx="6" cy="10" r="3.2" fill="none" stroke="#eee" stroke-width="1.3"/><path d="M1 19 Q2 14 6 14 Q10 14 11 19" fill="none" stroke="#eee" stroke-width="1.3"/></svg>
 <svg style="left:1393px;top:19px" width="17" height="9" viewBox="0 0 17 9"><path d="M1 8 L8.5 1 L16 8" fill="none" stroke="#eee" stroke-width="1.3"/></svg>
 <svg style="left:1432px;top:13px" width="20" height="20" viewBox="0 0 20 20"><path d="M12 2 Q15 1 14 4 L6 16 Q4 19 3 17 Q2 14 5 12 Q9 10 11 13 Q13 15 16 13 Q18 11 15 10" fill="none" stroke="#eee" stroke-width="1.4"/></svg>
 <span class="a" style="left:1477px;top:6px;font-size:13px;line-height:14px;color:#f4f4f4;white-space:nowrap;letter-spacing:0.3px">4:36 PM</span>
 <span class="a" style="left:1474px;top:27px;font-size:13.6px;line-height:14px;color:#f4f4f4;white-space:nowrap;letter-spacing:0.2px">9/5/2018</span>
 <svg style="left:1553px;top:13px" width="21" height="21" viewBox="0 0 21 21"><path d="M1 1 H20 V15 H13 L10.5 18 L8 15 H1Z" fill="none" stroke="#eee" stroke-width="1.3"/></svg>
 <div class="a" style="left:1596px;top:0;width:1px;height:45px;background:#7a7a7a"></div>
</div>
</body></html>
